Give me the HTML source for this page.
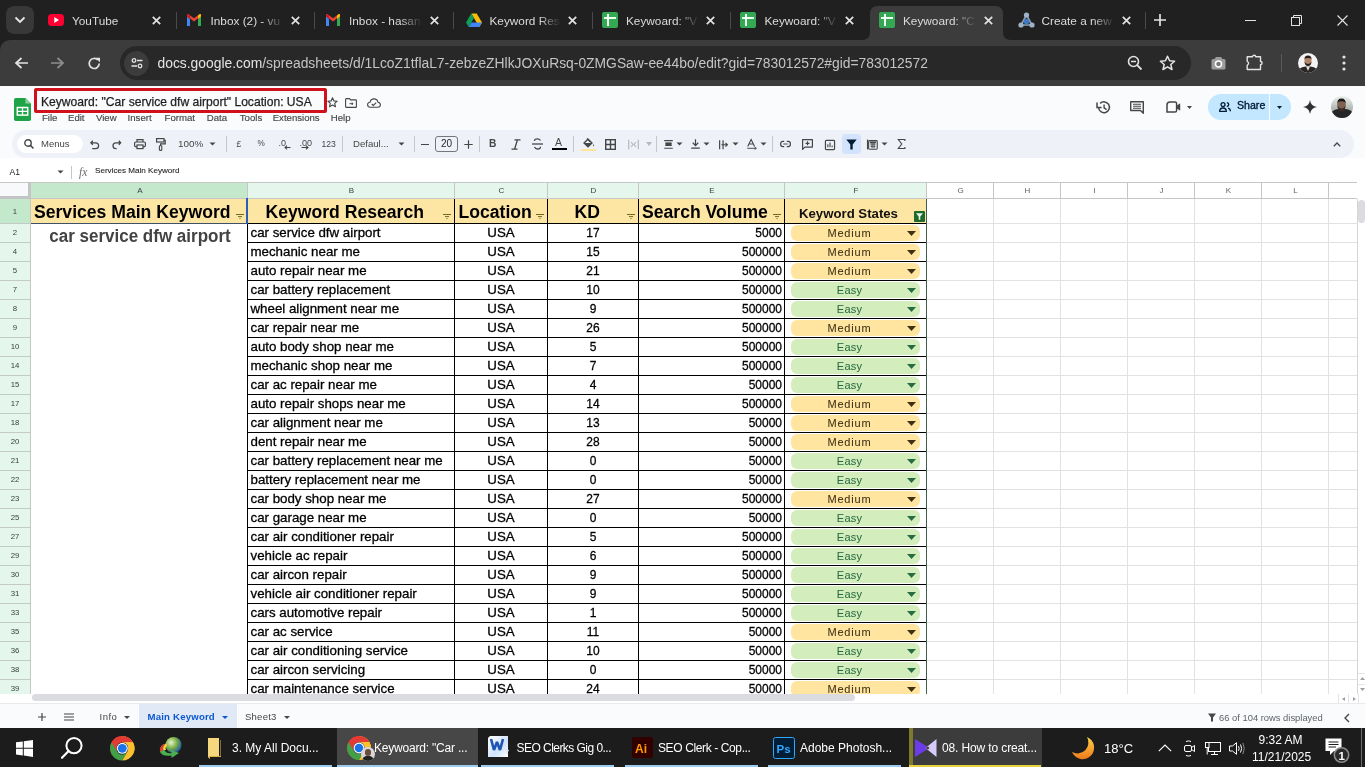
<!DOCTYPE html>
<html><head><meta charset="utf-8">
<style>
*{box-sizing:border-box;margin:0;padding:0}
html,body{width:1365px;height:767px;overflow:hidden;background:#fff;font-family:"Liberation Sans",sans-serif}
.a{position:absolute}
.t{white-space:nowrap;line-height:1}
.d{-webkit-text-stroke:0.3px #000}
svg.a{display:block;overflow:visible}
</style></head><body><div id="root" style="position:absolute;left:0;top:0;width:1365px;height:767px;overflow:hidden;will-change:transform">

<div class="a" style="left:0px;top:0px;width:1365px;height:40px;background:#202020;"></div>
<div class="a" style="left:6px;top:6px;width:28px;height:28px;background:#383838;border-radius:8px"></div>
<svg class="a" style="left:14px;top:16px;" width="12" height="8" viewBox="0 0 12 8"><path d="M1.5 1.5 L6 6 L10.5 1.5" fill="none" stroke="#e8e8e8" stroke-width="1.8"/></svg>
<svg class="a" style="left:862px;top:6px" width="150" height="34" viewBox="0 0 150 34"><path d="M0 34 Q8 34 8 26 L8 8 Q8 0 16 0 L133 0 Q141 0 141 8 L141 26 Q141 34 149 34 Z" fill="#3c3c3c"/></svg>
<svg class="a" style="left:48px;top:12px;" width="16" height="16" viewBox="0 0 16 16"><rect x="0" y="2" width="16" height="12" rx="3.5" fill="#ff0033"/><path d="M6.3 5 L11 8 L6.3 11 Z" fill="#fff"/></svg>
<div class="a t" style="left:72.0px;top:15.8px;width:73.0px;overflow:hidden;font-size:11.8px;color:#dcdcdc">YouTube</div>
<div class="a" style="left:123.0px;top:10px;width:22px;height:20px;background:linear-gradient(90deg,#20202000,#202020)"></div>
<svg class="a" style="left:152px;top:15.5px;" width="9" height="9" viewBox="0 0 9 9"><path d="M0.8 0.8 L8.2 8.2 M8.2 0.8 L0.8 8.2" stroke="#e3e3e3" stroke-width="1.7"/></svg>
<div class="a" style="left:176px;top:12px;width:1px;height:17px;background:#4a4a4a;"></div>
<svg class="a" style="left:186px;top:13px;" width="16" height="14" viewBox="0 0 16 14"><path d="M1 3 L1 13 L4 13 L4 6 Z" fill="#4285f4"/><path d="M15 3 L15 13 L12 13 L12 6 Z" fill="#34a853"/><path d="M1 3 L8 8.5 L15 3 L15 2 Q15 0.5 13.5 1.2 L8 5.3 L2.5 1.2 Q1 0.5 1 2 Z" fill="#ea4335"/><path d="M12 6 L15 3.5 L15 2 Q14.8 0.6 13.4 1.3 L12 2.4 Z" fill="#fbbc04"/><path d="M4 6 L1 3.5 L1 2 Q1.2 0.6 2.6 1.3 L4 2.4 Z" fill="#c5221f"/></svg>
<div class="a t" style="left:210.5px;top:15.8px;width:73.0px;overflow:hidden;font-size:11.8px;color:#dcdcdc">Inbox (2) - vu</div>
<div class="a" style="left:261.5px;top:10px;width:22px;height:20px;background:linear-gradient(90deg,#20202000,#202020)"></div>
<svg class="a" style="left:291px;top:15.5px;" width="9" height="9" viewBox="0 0 9 9"><path d="M0.8 0.8 L8.2 8.2 M8.2 0.8 L0.8 8.2" stroke="#e3e3e3" stroke-width="1.7"/></svg>
<div class="a" style="left:314px;top:12px;width:1px;height:17px;background:#4a4a4a;"></div>
<svg class="a" style="left:325px;top:13px;" width="16" height="14" viewBox="0 0 16 14"><path d="M1 3 L1 13 L4 13 L4 6 Z" fill="#4285f4"/><path d="M15 3 L15 13 L12 13 L12 6 Z" fill="#34a853"/><path d="M1 3 L8 8.5 L15 3 L15 2 Q15 0.5 13.5 1.2 L8 5.3 L2.5 1.2 Q1 0.5 1 2 Z" fill="#ea4335"/><path d="M12 6 L15 3.5 L15 2 Q14.8 0.6 13.4 1.3 L12 2.4 Z" fill="#fbbc04"/><path d="M4 6 L1 3.5 L1 2 Q1.2 0.6 2.6 1.3 L4 2.4 Z" fill="#c5221f"/></svg>
<div class="a t" style="left:349.0px;top:15.8px;width:73.0px;overflow:hidden;font-size:11.8px;color:#dcdcdc">Inbox - hasan</div>
<div class="a" style="left:400.0px;top:10px;width:22px;height:20px;background:linear-gradient(90deg,#20202000,#202020)"></div>
<svg class="a" style="left:430px;top:15.5px;" width="9" height="9" viewBox="0 0 9 9"><path d="M0.8 0.8 L8.2 8.2 M8.2 0.8 L0.8 8.2" stroke="#e3e3e3" stroke-width="1.7"/></svg>
<div class="a" style="left:453px;top:12px;width:1px;height:17px;background:#4a4a4a;"></div>
<svg class="a" style="left:466px;top:13px;" width="16" height="14" viewBox="0 0 16 14"><path d="M5.3 0.5 L10.7 0.5 L16 9.5 L13.3 14 Z" fill="#fbbc04"/><path d="M5.3 0.5 L0 9.5 L2.7 14 L8 5 Z" fill="#0f9d58"/><path d="M2.7 14 L13.3 14 L16 9.5 L5.4 9.5 Z" fill="#4285f4"/></svg>
<div class="a t" style="left:489.5px;top:15.8px;width:71.0px;overflow:hidden;font-size:11.8px;color:#dcdcdc">Keyword Rese</div>
<div class="a" style="left:538.5px;top:10px;width:22px;height:20px;background:linear-gradient(90deg,#20202000,#202020)"></div>
<svg class="a" style="left:568px;top:15.5px;" width="9" height="9" viewBox="0 0 9 9"><path d="M0.8 0.8 L8.2 8.2 M8.2 0.8 L0.8 8.2" stroke="#e3e3e3" stroke-width="1.7"/></svg>
<div class="a" style="left:592px;top:12px;width:1px;height:17px;background:#4a4a4a;"></div>
<svg class="a" style="left:602px;top:12px;" width="16" height="16" viewBox="0 0 16 16"><rect x="0" y="0" width="16" height="16" rx="2" fill="#34a853"/><path d="M2 6 L14 6 M6 2 L6 14" stroke="#f0fff4" stroke-width="2"/></svg>
<div class="a t" style="left:626.0px;top:15.8px;width:73.0px;overflow:hidden;font-size:11.8px;color:#dcdcdc">Keywoard: "V</div>
<div class="a" style="left:677.0px;top:10px;width:22px;height:20px;background:linear-gradient(90deg,#20202000,#202020)"></div>
<svg class="a" style="left:706px;top:15.5px;" width="9" height="9" viewBox="0 0 9 9"><path d="M0.8 0.8 L8.2 8.2 M8.2 0.8 L0.8 8.2" stroke="#e3e3e3" stroke-width="1.7"/></svg>
<div class="a" style="left:730px;top:12px;width:1px;height:17px;background:#4a4a4a;"></div>
<svg class="a" style="left:740px;top:12px;" width="16" height="16" viewBox="0 0 16 16"><rect x="0" y="0" width="16" height="16" rx="2" fill="#34a853"/><path d="M2 6 L14 6 M6 2 L6 14" stroke="#f0fff4" stroke-width="2"/></svg>
<div class="a t" style="left:764.5px;top:15.8px;width:73.0px;overflow:hidden;font-size:11.8px;color:#dcdcdc">Keywoard: "V</div>
<div class="a" style="left:815.5px;top:10px;width:22px;height:20px;background:linear-gradient(90deg,#20202000,#202020)"></div>
<svg class="a" style="left:845px;top:15.5px;" width="9" height="9" viewBox="0 0 9 9"><path d="M0.8 0.8 L8.2 8.2 M8.2 0.8 L0.8 8.2" stroke="#e3e3e3" stroke-width="1.7"/></svg>
<svg class="a" style="left:879px;top:12px;" width="16" height="16" viewBox="0 0 16 16"><rect x="0" y="0" width="16" height="16" rx="2" fill="#34a853"/><path d="M2 6 L14 6 M6 2 L6 14" stroke="#f0fff4" stroke-width="2"/></svg>
<div class="a t" style="left:903.0px;top:15.8px;width:73.0px;overflow:hidden;font-size:11.8px;color:#dcdcdc">Keywoard: "C</div>
<div class="a" style="left:954.0px;top:10px;width:22px;height:20px;background:linear-gradient(90deg,#3c3c3c00,#3c3c3c)"></div>
<svg class="a" style="left:984px;top:15.5px;" width="9" height="9" viewBox="0 0 9 9"><path d="M0.8 0.8 L8.2 8.2 M8.2 0.8 L0.8 8.2" stroke="#e3e3e3" stroke-width="1.7"/></svg>
<svg class="a" style="left:1018px;top:12px;" width="17" height="17" viewBox="0 0 17 17"><path d="M8.5 3 L3 13 L14 13 Z" fill="none" stroke="#8fa3b8" stroke-width="1.6"/><circle cx="8.5" cy="3" r="2.6" fill="#9fb3c8"/><circle cx="3" cy="13" r="2.6" fill="#9fb3c8"/><circle cx="14" cy="13" r="2.6" fill="#9fb3c8"/><circle cx="8.5" cy="9.5" r="2.8" fill="#3f7ac0"/></svg>
<div class="a t" style="left:1041.5px;top:15.8px;width:73.0px;overflow:hidden;font-size:11.8px;color:#dcdcdc">Create a new</div>
<div class="a" style="left:1092.5px;top:10px;width:22px;height:20px;background:linear-gradient(90deg,#20202000,#202020)"></div>
<svg class="a" style="left:1122px;top:15.5px;" width="9" height="9" viewBox="0 0 9 9"><path d="M0.8 0.8 L8.2 8.2 M8.2 0.8 L0.8 8.2" stroke="#e3e3e3" stroke-width="1.7"/></svg>
<div class="a" style="left:1145px;top:12px;width:1px;height:17px;background:#4a4a4a;"></div>
<svg class="a" style="left:1154px;top:14px;" width="12" height="12" viewBox="0 0 12 12"><path d="M6 0 L6 12 M0 6 L12 6" stroke="#e3e3e3" stroke-width="1.7"/></svg>
<div class="a" style="left:1245px;top:20px;width:11px;height:1px;background:#e3e3e3;"></div>
<svg class="a" style="left:1291px;top:15px;" width="11" height="11" viewBox="0 0 11 11"><rect x="0.5" y="2.5" width="8" height="8" fill="none" stroke="#e3e3e3" stroke-width="1"/><path d="M2.5 2.5 L2.5 0.5 L10.5 0.5 L10.5 8.5 L8.5 8.5" fill="none" stroke="#e3e3e3" stroke-width="1"/></svg>
<svg class="a" style="left:1337px;top:15px;" width="11" height="11" viewBox="0 0 11 11"><path d="M0.5 0.5 L10.5 10.5 M10.5 0.5 L0.5 10.5" stroke="#e3e3e3" stroke-width="1.1"/></svg>
<div class="a" style="left:0px;top:40px;width:14px;height:14px;background:#202020;"></div>
<div class="a" style="left:0px;top:40px;width:1365px;height:46px;background:#3c3c3c;border-top-left-radius:10px"></div>
<svg class="a" style="left:15px;top:57px;" width="13" height="12" viewBox="0 0 13 12"><path d="M6.5 1 L1 6 L6.5 11 M1 6 L13 6" fill="none" stroke="#e3e3e3" stroke-width="1.7"/></svg>
<svg class="a" style="left:51px;top:57px;" width="13" height="12" viewBox="0 0 13 12"><path d="M6.5 1 L12 6 L6.5 11 M12 6 L0 6" fill="none" stroke="#8e8e8e" stroke-width="1.7"/></svg>
<svg class="a" style="left:88px;top:57px;" width="13" height="13" viewBox="0 0 13 13"><path d="M11.2 6.5 A5 5 0 1 1 9.8 3" fill="none" stroke="#e3e3e3" stroke-width="1.7"/><path d="M7.5 0.8 L12 0.8 L12 5.3 Z" fill="#e3e3e3"/></svg>
<div class="a" style="left:120px;top:46px;width:1071px;height:34px;background:#282828;border-radius:17px"></div>
<div class="a" style="left:124px;top:51px;width:25px;height:25px;background:#3c3c3c;border-radius:50%"></div>
<svg class="a" style="left:131px;top:58px;" width="12" height="11" viewBox="0 0 12 11"><circle cx="3" cy="2.5" r="1.8" fill="none" stroke="#e3e3e3" stroke-width="1.3"/><path d="M6 2.5 L11.5 2.5 M0.5 8 L6 8" stroke="#e3e3e3" stroke-width="1.3"/><circle cx="9" cy="8" r="1.8" fill="none" stroke="#e3e3e3" stroke-width="1.3"/></svg>
<div class="a t" style="left:157.5px;top:57px;font-size:13.85px;color:#e3e3e3">docs.google.com<span style="color:#c4c4c4">/spreadsheets/d/1LcoZ1tflaL7-zebzeZHlkJOXuRsq-0ZMGSaw-ee44bo/edit?gid=783012572#gid=783012572</span></div>
<svg class="a" style="left:1127px;top:55px;" width="16" height="16" viewBox="0 0 16 16"><circle cx="6.5" cy="6.5" r="5" fill="none" stroke="#e3e3e3" stroke-width="1.6"/><path d="M4 6.5 L9 6.5" stroke="#e3e3e3" stroke-width="1.5"/><path d="M10.2 10.2 L14.5 14.5" stroke="#e3e3e3" stroke-width="1.8"/></svg>
<svg class="a" style="left:1159px;top:55px;" width="17" height="16" viewBox="0 0 17 16"><path d="M8.5 1.2 L10.6 5.8 L15.6 6.2 L11.8 9.5 L13 14.5 L8.5 11.8 L4 14.5 L5.2 9.5 L1.4 6.2 L6.4 5.8 Z" fill="none" stroke="#e3e3e3" stroke-width="1.5" stroke-linejoin="round"/></svg>
<svg class="a" style="left:1211px;top:56px;" width="15" height="14" viewBox="0 0 15 14"><path d="M0.5 4.5 Q0.5 3 2 3 L3.5 3 L5 1 L10 1 L11.5 3 L13 3 Q14.5 3 14.5 4.5 L14.5 12 Q14.5 13.5 13 13.5 L2 13.5 Q0.5 13.5 0.5 12 Z" fill="#9c9c9c"/><circle cx="7.5" cy="8" r="3" fill="#777" stroke="#fff" stroke-width="1.5"/></svg>
<svg class="a" style="left:1246px;top:54px;" width="17" height="17" viewBox="0 0 17 17"><path d="M1.2 2.8 L6.5 2.8 A1.6 1.6 0 0 1 9.7 2.8 L14.5 2.8 L14.5 7.5 A1.6 1.6 0 0 1 14.5 10.7 L14.5 15.5 L1.2 15.5 L1.2 11.2 Q4 9.2 1.2 7.2 Z" fill="none" stroke="#e3e3e3" stroke-width="1.4" stroke-linejoin="round"/></svg>
<div class="a" style="left:1281px;top:54px;width:1px;height:18px;background:#5a5a5a;"></div>
<svg class="a" style="left:1298px;top:53px" width="20" height="20" viewBox="0 0 20 20"><defs><clipPath id="av2"><circle cx="10" cy="10" r="10"/></clipPath></defs><g clip-path="url(#av2)"><rect width="20" height="20" fill="#f4f4f4"/><path d="M0 20 L1 16 Q4 13.5 7.5 13.5 L12.5 13.5 Q16 13.5 19 16 L20 20 Z" fill="#2a2626"/><path d="M8 13.5 L10 18 L12 13.5 Z" fill="#e8e4e0"/><ellipse cx="10" cy="8" rx="3.6" ry="4.6" fill="#b3856a"/><path d="M6.3 7 Q6.3 2.6 10 2.6 Q13.7 2.6 13.7 7 L13 5.6 Q10 4.3 7 5.6 Z" fill="#2a1e18"/><path d="M6.5 9 Q7 13 10 13 Q13 13 13.5 9 Q11.8 11 10 11 Q8.2 11 6.5 9 Z" fill="#2a1e18"/></g></svg>
<svg class="a" style="left:1342px;top:55px;" width="4" height="16" viewBox="0 0 4 16"><circle cx="2" cy="2" r="1.6" fill="#e3e3e3"/><circle cx="2" cy="8" r="1.6" fill="#e3e3e3"/><circle cx="2" cy="14" r="1.6" fill="#e3e3e3"/></svg>
<div class="a" style="left:0px;top:86px;width:1365px;height:96px;background:#f9fbfd;"></div>
<svg class="a" style="left:14px;top:98px;" width="17" height="23" viewBox="0 0 17 23"><path d="M1.8 0 L11.5 0 L17 5.5 L17 21.2 Q17 23 15.2 23 L1.8 23 Q0 23 0 21.2 L0 1.8 Q0 0 1.8 0 Z" fill="#1ea446"/><path d="M11.5 0 L17 5.5 L11.5 5.5 Z" fill="#8fd19e"/><rect x="3.3" y="9.5" width="10.4" height="7.6" fill="none" stroke="#fff" stroke-width="1.5"/><path d="M3.3 13.3 L13.7 13.3 M8.5 9.5 L8.5 17.1" stroke="#fff" stroke-width="1.3"/></svg>
<div class="a" style="left:34px;top:88px;width:293px;height:25px;background:transparent;border:3px solid #d0101a;border-radius:2px"></div>
<div class="a t" style="left:41px;top:95.9px;font-size:12.1px;color:#1f1f1f;-webkit-text-stroke:0.25px #1f1f1f">Keywoard: "Car service dfw airport" Location: USA</div>
<svg class="a" style="left:326.5px;top:97px;" width="11" height="11" viewBox="0 0 11 11"><path d="M5.5 0.8 L6.9 3.9 L10.2 4.2 L7.7 6.4 L8.5 9.8 L5.5 8 L2.5 9.8 L3.3 6.4 L0.8 4.2 L4.1 3.9 Z" fill="none" stroke="#444746" stroke-width="1.1" stroke-linejoin="round"/></svg>
<svg class="a" style="left:345px;top:97.5px;" width="12" height="10" viewBox="0 0 12 10"><path d="M0.6 1.3 Q0.6 0.6 1.3 0.6 L4.5 0.6 L5.6 1.9 L10.7 1.9 Q11.4 1.9 11.4 2.6 L11.4 8.7 Q11.4 9.4 10.7 9.4 L1.3 9.4 Q0.6 9.4 0.6 8.7 Z" fill="none" stroke="#444746" stroke-width="1.1"/><path d="M4.5 5.7 L8 5.7 M6.7 4.4 L8 5.7 L6.7 7" fill="none" stroke="#444746" stroke-width="1"/></svg>
<svg class="a" style="left:367px;top:97.5px;" width="14" height="10" viewBox="0 0 14 10"><path d="M3.3 9.3 Q0.6 9.3 0.6 6.8 Q0.6 4.5 3 4.3 Q3.7 0.9 7 0.9 Q10.2 0.9 11 4.2 Q13.4 4.5 13.4 6.8 Q13.4 9.3 10.7 9.3 Z" fill="none" stroke="#444746" stroke-width="1.1"/><path d="M4.7 6 L6.3 7.4 L9.2 4.6" fill="none" stroke="#444746" stroke-width="1.1"/></svg>
<div class="a t" style="left:42px;top:112.8px;font-size:9.6px;color:#444746;-webkit-text-stroke:0.15px #444746">File</div>
<div class="a t" style="left:68px;top:112.8px;font-size:9.6px;color:#444746;-webkit-text-stroke:0.15px #444746">Edit</div>
<div class="a t" style="left:96px;top:112.8px;font-size:9.6px;color:#444746;-webkit-text-stroke:0.15px #444746">View</div>
<div class="a t" style="left:127.6px;top:112.8px;font-size:9.6px;color:#444746;-webkit-text-stroke:0.15px #444746">Insert</div>
<div class="a t" style="left:164.6px;top:112.8px;font-size:9.6px;color:#444746;-webkit-text-stroke:0.15px #444746">Format</div>
<div class="a t" style="left:206.8px;top:112.8px;font-size:9.6px;color:#444746;-webkit-text-stroke:0.15px #444746">Data</div>
<div class="a t" style="left:239.8px;top:112.8px;font-size:9.6px;color:#444746;-webkit-text-stroke:0.15px #444746">Tools</div>
<div class="a t" style="left:272.7px;top:112.8px;font-size:9.6px;color:#444746;-webkit-text-stroke:0.15px #444746">Extensions</div>
<div class="a t" style="left:330.8px;top:112.8px;font-size:9.6px;color:#444746;-webkit-text-stroke:0.15px #444746">Help</div>
<svg class="a" style="left:1096px;top:100px;" width="15" height="15" viewBox="0 0 15 15"><path d="M2.6 7.5 A5.4 5.4 0 1 0 4.2 3.4" fill="none" stroke="#444746" stroke-width="1.5"/><path d="M1 2.6 L1 7.5 L5.6 7.5" fill="none" stroke="#444746" stroke-width="1.5"/><path d="M8.1 4.4 L8.1 7.9 L10.6 9.6" fill="none" stroke="#444746" stroke-width="1.4"/></svg>
<svg class="a" style="left:1130px;top:101px;" width="14" height="13" viewBox="0 0 14 13"><path d="M0.7 0.7 L13.3 0.7 L13.3 12.3 L10.5 9.5 L0.7 9.5 Z" fill="none" stroke="#444746" stroke-width="1.4" stroke-linejoin="round"/><path d="M3 3.2 L11 3.2 M3 5.2 L11 5.2 M3 7.2 L11 7.2" stroke="#444746" stroke-width="1.1"/></svg>
<svg class="a" style="left:1166px;top:101px;" width="15" height="12" viewBox="0 0 15 12"><path d="M1 4 Q1 1 4 1 L9 1 Q10.6 1 10.6 2.6 L10.6 9.4 Q10.6 11 9 11 L1 11 Z" fill="none" stroke="#444746" stroke-width="1.5"/><path d="M10.6 4.8 L14.2 2.2 L14.2 9.8 L10.6 7.2 Z" fill="#444746"/></svg>
<svg class="a" style="left:1187px;top:106px;" width="5" height="3" viewBox="0 0 5 3"><path d="M0 0 L5 0 L2.5 3 Z" fill="#444746"/></svg>
<div class="a" style="left:1208px;top:94px;width:83px;height:26px;background:#c2e7ff;border-radius:13px"></div>
<div class="a" style="left:1269px;top:94px;width:1px;height:26px;background:#f9fbfd;"></div>
<svg class="a" style="left:1219px;top:102px;" width="12" height="10" viewBox="0 0 12 10"><circle cx="4" cy="2.6" r="2" fill="none" stroke="#001d35" stroke-width="1.3"/><path d="M0.7 9.3 Q0.7 6 4 6 Q7.3 6 7.3 9.3 Z" fill="none" stroke="#001d35" stroke-width="1.3"/><path d="M7.8 0.7 Q9.8 0.9 9.8 2.6 Q9.8 4.3 7.8 4.5 M9 6.1 Q11.4 6.6 11.4 9.3" fill="none" stroke="#001d35" stroke-width="1.3"/></svg>
<div class="a t" style="left:1237px;top:100.2px;font-size:10.6px;color:#001d35;-webkit-text-stroke:0.35px #001d35">Share</div>
<svg class="a" style="left:1277px;top:106px;" width="5" height="3" viewBox="0 0 5 3"><path d="M0 0 L5 0 L2.5 3 Z" fill="#001d35"/></svg>
<svg class="a" style="left:1303px;top:100px;" width="14" height="14" viewBox="0 0 14 14"><path d="M7 0 Q7.8 6.2 14 7 Q7.8 7.8 7 14 Q6.2 7.8 0 7 Q6.2 6.2 7 0 Z" fill="#303134"/></svg>
<svg class="a" style="left:1331px;top:96px" width="22" height="22" viewBox="0 0 22 22"><defs><clipPath id="av1"><circle cx="11" cy="11" r="11"/></clipPath><linearGradient id="avg1" x1="0" y1="0" x2="0" y2="1"><stop offset="0" stop-color="#eef0ee"/><stop offset="0.5" stop-color="#b9c0bb"/><stop offset="1" stop-color="#8b938d"/></linearGradient></defs><g clip-path="url(#av1)"><rect width="22" height="22" fill="url(#avg1)"/><path d="M0 22 L0 17 Q3 13 8 13 L14 13 Q19 13 22 17 L22 22 Z" fill="#262626"/><ellipse cx="10.5" cy="9" rx="4.3" ry="5.5" fill="#7e6252"/><path d="M6.2 8 Q6 2.5 10.5 2.5 Q15 2.5 14.8 8 L14 6 Q10.5 4.5 7 6 Z" fill="#1c1a18"/><path d="M6.4 10 Q7 15.5 10.5 15.5 Q14 15.5 14.6 10 Q12.5 12.5 10.5 12.5 Q8.5 12.5 6.4 10 Z" fill="#3a2c24"/></g></svg>
<div class="a" style="left:12px;top:130px;width:1342px;height:28px;background:#eef2f8;border-radius:14px"></div>
<div class="a" style="left:17px;top:135px;width:66px;height:18px;background:#ffffff;border-radius:9px"></div>
<svg class="a" style="left:24px;top:139px;" width="10" height="10" viewBox="0 0 10 10"><circle cx="4" cy="4" r="3.2" fill="none" stroke="#444746" stroke-width="1.4"/><path d="M6.4 6.4 L9.5 9.5" stroke="#444746" stroke-width="1.5"/></svg>
<div class="a t" style="left:41px;top:138.8px;font-size:9.5px;color:#444746;">Menus</div>
<svg class="a" style="left:90px;top:140px;" width="10" height="10" viewBox="0 0 10 10"><path d="M2.8 0.8 L0.9 2.8 L2.8 4.8 M0.9 2.8 L5.6 2.8 Q8.6 2.8 8.6 5.8 Q8.6 8.7 5.6 8.7 L2.2 8.7" fill="none" stroke="#444746" stroke-width="1.25"/></svg>
<svg class="a" style="left:112px;top:140px;" width="10" height="10" viewBox="0 0 10 10"><path d="M6.8 0.8 L8.7 2.8 L6.8 4.8 M8.7 2.8 L4 2.8 Q1 2.8 1 5.8 Q1 8.7 4 8.7 L4.6 8.7" fill="none" stroke="#444746" stroke-width="1.25"/></svg>
<svg class="a" style="left:134px;top:139px;" width="12" height="10" viewBox="0 0 12 10"><path d="M3 3 L3 0.6 L9 0.6 L9 3" fill="none" stroke="#444746" stroke-width="1.2"/><rect x="0.6" y="3" width="10.8" height="4.8" rx="1.2" fill="none" stroke="#444746" stroke-width="1.2"/><rect x="3" y="6" width="6" height="3.6" fill="#edf2fa" stroke="#444746" stroke-width="1.2"/></svg>
<svg class="a" style="left:156px;top:138px;" width="10" height="13" viewBox="0 0 10 13"><rect x="0.6" y="0.6" width="7.4" height="3.4" fill="none" stroke="#444746" stroke-width="1.2"/><path d="M8 2.3 L9.2 2.3 L9.2 5.8 L4.6 5.8 L4.6 7.8" fill="none" stroke="#444746" stroke-width="1.2"/><rect x="3.4" y="7.8" width="2.4" height="4.6" rx="0.6" fill="none" stroke="#444746" stroke-width="1.1"/></svg>
<div class="a t" style="left:178px;top:138.8px;font-size:9.9px;color:#444746;">100%</div>
<svg class="a" style="left:209px;top:142px;" width="7" height="4" viewBox="0 0 7 4"><path d="M0.5 0.5 L6.5 0.5 L3.5 3.5 Z" fill="#444746"/></svg>
<div class="a" style="left:226px;top:136px;width:1px;height:16px;background:#c7c7c7;"></div>
<div class="a t" style="left:236.5px;top:139.5px;font-size:8.6px;color:#444746;">£</div>
<div class="a t" style="left:257.5px;top:139.8px;font-size:8.2px;color:#444746;">%</div>
<div class="a t" style="left:278.5px;top:138.5px;font-size:9px;color:#444746;">.0</div>
<svg class="a" style="left:284px;top:145px;" width="7" height="5" viewBox="0 0 7 5"><path d="M6.5 2.5 L1 2.5 M3 0.6 L1 2.5 L3 4.4" fill="none" stroke="#444746" stroke-width="1.1"/></svg>
<div class="a t" style="left:299.5px;top:138.5px;font-size:9px;color:#444746;">.00</div>
<svg class="a" style="left:301px;top:145px;" width="8" height="5" viewBox="0 0 8 5"><path d="M0.5 2.5 L7 2.5 M5 0.6 L7 2.5 L5 4.4" fill="none" stroke="#444746" stroke-width="1.1"/></svg>
<div class="a t" style="left:321.5px;top:139.8px;font-size:8.6px;color:#444746;">123</div>
<div class="a" style="left:342px;top:136px;width:1px;height:16px;background:#c7c7c7;"></div>
<div class="a t" style="left:353px;top:139px;font-size:9.6px;color:#444746;">Defaul...</div>
<svg class="a" style="left:398px;top:142px;" width="7" height="4" viewBox="0 0 7 4"><path d="M0.5 0.5 L6.5 0.5 L3.5 3.5 Z" fill="#444746"/></svg>
<div class="a" style="left:414px;top:136px;width:1px;height:16px;background:#c7c7c7;"></div>
<div class="a" style="left:421px;top:144px;width:8px;height:1.2px;background:#444746;"></div>
<div class="a" style="left:435px;top:136px;width:23px;height:16px;background:transparent;border:1px solid #747775;border-radius:3px"></div>
<div class="a t" style="left:441px;top:139.2px;font-size:10px;color:#1f1f1f;">20</div>
<svg class="a" style="left:464px;top:140px;" width="9" height="9" viewBox="0 0 9 9"><path d="M4.5 0.3 L4.5 8.7 M0.3 4.5 L8.7 4.5" stroke="#444746" stroke-width="1.2"/></svg>
<div class="a" style="left:479px;top:136px;width:1px;height:16px;background:#c7c7c7;"></div>
<div class="a t" style="left:489px;top:139.3px;font-size:10.2px;color:#444746;font-weight:bold">B</div>
<svg class="a" style="left:511px;top:139px;" width="10" height="11" viewBox="0 0 10 11"><path d="M3.5 0.8 L9.5 0.8 M0.5 10.2 L6.5 10.2 M6.5 0.8 L3.5 10.2" stroke="#444746" stroke-width="1.3"/></svg>
<svg class="a" style="left:532px;top:138px;" width="11" height="12" viewBox="0 0 11 12"><path d="M8.5 2.5 Q7.5 0.8 5.5 0.8 Q2.5 0.8 2.5 3 M2.5 9 Q3.5 11 5.5 11 Q8.5 11 8.5 8.8" fill="none" stroke="#444746" stroke-width="1.3"/><path d="M0 6 L11 6" stroke="#444746" stroke-width="1.3"/></svg>
<div class="a t" style="left:555px;top:137px;font-size:10.5px;color:#444746;">A</div>
<div class="a" style="left:552px;top:148px;width:15px;height:2px;background:#000;"></div>
<div class="a" style="left:573px;top:136px;width:1px;height:16px;background:#c7c7c7;"></div>
<svg class="a" style="left:583px;top:138px;" width="12" height="10" viewBox="0 0 12 10"><path d="M4 0.5 L7.5 4" stroke="#444746" stroke-width="1.2"/><path d="M1 5 L5 1.2 L9 5 L5 8.8 Z" fill="none" stroke="#444746" stroke-width="1.3"/><path d="M1 5 L9 5 L5 8.8 Z" fill="#444746"/><path d="M10.5 6 Q11.6 7.6 10.5 8.6 Q9.4 7.6 10.5 6 Z" fill="#444746"/></svg>
<div class="a" style="left:581px;top:149px;width:15px;height:1.5px;background:#fde49b;"></div>
<svg class="a" style="left:605px;top:139px;" width="11" height="11" viewBox="0 0 11 11"><rect x="0.7" y="0.7" width="9.6" height="9.6" fill="none" stroke="#444746" stroke-width="1.4"/><path d="M5.5 0.7 L5.5 10.3 M0.7 5.5 L10.3 5.5" stroke="#444746" stroke-width="1.4"/></svg>
<svg class="a" style="left:628px;top:139px;" width="11" height="11" viewBox="0 0 11 11"><path d="M0.7 0.7 L0.7 10.3 M10.3 0.7 L10.3 10.3 M3 3 L5 5.5 L3 8 M8 3 L6 5.5 L8 8" fill="none" stroke="#b5b8bc" stroke-width="1.2"/></svg>
<svg class="a" style="left:646px;top:142px;" width="6" height="4" viewBox="0 0 6 4"><path d="M0 0 L6 0 L3 4 Z" fill="#b5b8bc"/></svg>
<div class="a" style="left:656px;top:136px;width:1px;height:16px;background:#c7c7c7;"></div>
<svg class="a" style="left:663px;top:139px;transform:scale(0.86)" width="11" height="11" viewBox="0 0 11 11"><path d="M0.5 1 L10.5 1 M2 4 L9 4 M2 6.5 L9 6.5 M0.5 9.8 L10.5 9.8" stroke="#444746" stroke-width="1.2"/><rect x="2" y="3.2" width="7" height="4" fill="#444746"/></svg>
<svg class="a" style="left:676px;top:142px;" width="7" height="4" viewBox="0 0 7 4"><path d="M0.5 0.5 L6.5 0.5 L3.5 3.5 Z" fill="#444746"/></svg>
<svg class="a" style="left:690px;top:138px;transform:scale(0.86)" width="11" height="12" viewBox="0 0 11 12"><path d="M5.5 0.5 L5.5 7.5 M2.3 4.5 L5.5 7.8 L8.7 4.5 M0.5 10.8 L10.5 10.8" fill="none" stroke="#444746" stroke-width="1.4"/></svg>
<svg class="a" style="left:703px;top:142px;" width="7" height="4" viewBox="0 0 7 4"><path d="M0.5 0.5 L6.5 0.5 L3.5 3.5 Z" fill="#444746"/></svg>
<svg class="a" style="left:718px;top:139px;transform:scale(0.86)" width="11" height="12" viewBox="0 0 11 12"><path d="M1 0.5 L1 11 M5 0.5 L5 11 M3 5.7 L10 5.7 M7.8 3.5 L10 5.7 L7.8 7.9" fill="none" stroke="#444746" stroke-width="1.4"/></svg>
<svg class="a" style="left:732px;top:142px;" width="7" height="4" viewBox="0 0 7 4"><path d="M0.5 0.5 L6.5 0.5 L3.5 3.5 Z" fill="#444746"/></svg>
<svg class="a" style="left:746px;top:138px;transform:scale(0.86)" width="12" height="12" viewBox="0 0 12 12"><path d="M1 9 L5 0.8 L9 9 M2.5 6 L7.5 6" fill="none" stroke="#444746" stroke-width="1.3"/><path d="M0.5 11 L11 11 M9 9.5 L11 11 L9 12.5" fill="none" stroke="#444746" stroke-width="1.1"/></svg>
<svg class="a" style="left:760px;top:142px;" width="7" height="4" viewBox="0 0 7 4"><path d="M0.5 0.5 L6.5 0.5 L3.5 3.5 Z" fill="#444746"/></svg>
<div class="a" style="left:772px;top:136px;width:1px;height:16px;background:#c7c7c7;"></div>
<svg class="a" style="left:779px;top:140px;transform:scale(0.86)" width="13" height="8" viewBox="0 0 13 8"><path d="M5 1 L3.5 1 Q0.8 1 0.8 4 Q0.8 7 3.5 7 L5 7 M8 1 L9.5 1 Q12.2 1 12.2 4 Q12.2 7 9.5 7 L8 7 M4 4 L9 4" fill="none" stroke="#444746" stroke-width="1.4"/></svg>
<svg class="a" style="left:801px;top:138px;transform:scale(0.86)" width="13" height="13" viewBox="0 0 13 13"><path d="M0.8 0.8 L12.2 0.8 L12.2 9.5 L3.5 9.5 L0.8 12.2 Z" fill="none" stroke="#444746" stroke-width="1.4" stroke-linejoin="round"/><path d="M6.5 2.8 L6.5 7.5 M4.2 5.2 L8.8 5.2" stroke="#444746" stroke-width="1.4"/></svg>
<svg class="a" style="left:824px;top:139px;transform:scale(0.86)" width="12" height="12" viewBox="0 0 12 12"><rect x="0.7" y="0.7" width="10.6" height="10.6" rx="1" fill="none" stroke="#444746" stroke-width="1.4"/><path d="M3.5 8.5 L3.5 5 M6 8.5 L6 3 M8.5 8.5 L8.5 6.5" stroke="#444746" stroke-width="1.3"/></svg>
<div class="a" style="left:842px;top:134px;width:19px;height:20px;background:#d3e3fd;border-radius:4px"></div>
<svg class="a" style="left:846px;top:139px;" width="11" height="11" viewBox="0 0 11 11"><path d="M0.3 0.5 L10.7 0.5 L6.7 5.5 L6.7 10.5 L4.3 10.5 L4.3 5.5 Z" fill="#001d35"/></svg>
<svg class="a" style="left:866px;top:138px;transform:scale(0.86)" width="13" height="13" viewBox="0 0 13 13"><rect x="2" y="2" width="10" height="10" rx="1" fill="none" stroke="#444746" stroke-width="1.3"/><path d="M0.7 0.7 L0.7 12.2" stroke="#444746" stroke-width="1.3"/><path d="M4 6 L10 6 M4 8.5 L10 8.5 M6 5 L6 11 M8.3 5 L8.3 11" stroke="#444746" stroke-width="1.1"/><rect x="3.5" y="3" width="7" height="2" fill="#444746"/></svg>
<svg class="a" style="left:881px;top:142px;" width="7" height="4" viewBox="0 0 7 4"><path d="M0.5 0.5 L6.5 0.5 L3.5 3.5 Z" fill="#444746"/></svg>
<svg class="a" style="left:897px;top:138px;transform:scale(0.86)" width="9" height="12" viewBox="0 0 9 12"><path d="M8.5 2.5 L8.5 0.8 L0.8 0.8 L4.8 6 L0.8 11.2 L8.5 11.2 L8.5 9.5" fill="none" stroke="#444746" stroke-width="1.3"/></svg>
<svg class="a" style="left:1333px;top:142px;" width="8" height="5" viewBox="0 0 8 5"><path d="M0.8 4.2 L4 1 L7.2 4.2" fill="none" stroke="#444746" stroke-width="1.3"/></svg>
<div class="a" style="left:0px;top:158px;width:1365px;height:24px;background:#ffffff;"></div>
<div class="a t" style="left:9.5px;top:167.5px;font-size:8.6px;color:#1f1f1f;">A1</div>
<svg class="a" style="left:57px;top:170px;" width="7" height="4" viewBox="0 0 7 4"><path d="M0.5 0.5 L6.5 0.5 L3.5 3.5 Z" fill="#444746"/></svg>
<div class="a" style="left:71px;top:166px;width:1px;height:13px;background:#c7c7c7;"></div>
<div class="a t" style="left:79px;top:166.5px;font-size:11.5px;color:#6b6f73;font-family:'Liberation Serif',serif"><i>fx</i></div>
<div class="a t" style="left:95px;top:167.2px;font-size:8.1px;color:#1f1f1f;-webkit-text-stroke:0.1px #1f1f1f">Services Main Keyword</div>
<div class="a" style="left:0px;top:182px;width:1365px;height:17px;background:#ffffff;"></div>
<div class="a" style="left:1358px;top:183px;width:7px;height:15px;background:#f1f3f4;"></div>
<div class="a" style="left:0px;top:183px;width:28px;height:13px;background:#f8f9fa;"></div>
<div class="a" style="left:31px;top:183px;width:216px;height:15px;background:#c4e8cc;"></div>
<div class="a" style="left:248px;top:183px;width:678px;height:15px;background:#e5f6ec;"></div>
<div class="a" style="left:0px;top:182px;width:1365px;height:1px;background:#c4c7c5;"></div>
<div class="a" style="left:31px;top:198px;width:1334px;height:1px;background:#c4c7c5;"></div>
<div class="a" style="left:1357px;top:183px;width:1px;height:15px;background:#c4c7c5;"></div>
<div class="a" style="left:247px;top:183px;width:1px;height:15px;background:#c4c7c5;"></div>
<div class="a" style="left:454px;top:183px;width:1px;height:15px;background:#c4c7c5;"></div>
<div class="a" style="left:547px;top:183px;width:1px;height:15px;background:#c4c7c5;"></div>
<div class="a" style="left:638px;top:183px;width:1px;height:15px;background:#c4c7c5;"></div>
<div class="a" style="left:784px;top:183px;width:1px;height:15px;background:#c4c7c5;"></div>
<div class="a" style="left:926px;top:183px;width:1px;height:15px;background:#c4c7c5;"></div>
<div class="a" style="left:993px;top:183px;width:1px;height:15px;background:#c4c7c5;"></div>
<div class="a" style="left:1060px;top:183px;width:1px;height:15px;background:#c4c7c5;"></div>
<div class="a" style="left:1127px;top:183px;width:1px;height:15px;background:#c4c7c5;"></div>
<div class="a" style="left:1194px;top:183px;width:1px;height:15px;background:#c4c7c5;"></div>
<div class="a" style="left:1261px;top:183px;width:1px;height:15px;background:#c4c7c5;"></div>
<div class="a" style="left:1328px;top:183px;width:1px;height:15px;background:#c4c7c5;"></div>
<div class="a" style="left:28px;top:182px;width:3px;height:17px;background:#c2c4c5;"></div>
<div class="a" style="left:0px;top:196px;width:31px;height:3px;background:#c2c4c5;"></div>
<div class="a t" style="left:130.0px;top:187px;width:20px;text-align:center;font-size:8px;color:#3c4043">A</div>
<div class="a t" style="left:341.5px;top:187px;width:20px;text-align:center;font-size:8px;color:#3c4043">B</div>
<div class="a t" style="left:491.5px;top:187px;width:20px;text-align:center;font-size:8px;color:#3c4043">C</div>
<div class="a t" style="left:583.5px;top:187px;width:20px;text-align:center;font-size:8px;color:#3c4043">D</div>
<div class="a t" style="left:702.0px;top:187px;width:20px;text-align:center;font-size:8px;color:#3c4043">E</div>
<div class="a t" style="left:846.0px;top:187px;width:20px;text-align:center;font-size:8px;color:#3c4043">F</div>
<div class="a t" style="left:950.5px;top:187px;width:20px;text-align:center;font-size:8px;color:#5f6368">G</div>
<div class="a t" style="left:1017.5px;top:187px;width:20px;text-align:center;font-size:8px;color:#5f6368">H</div>
<div class="a t" style="left:1084.5px;top:187px;width:20px;text-align:center;font-size:8px;color:#5f6368">I</div>
<div class="a t" style="left:1151.5px;top:187px;width:20px;text-align:center;font-size:8px;color:#5f6368">J</div>
<div class="a t" style="left:1218.5px;top:187px;width:20px;text-align:center;font-size:8px;color:#5f6368">K</div>
<div class="a t" style="left:1285.5px;top:187px;width:20px;text-align:center;font-size:8px;color:#5f6368">L</div>
<div class="a" style="left:0px;top:199px;width:30px;height:24px;background:#c4e8cc;"></div>
<div class="a" style="left:0px;top:224px;width:30px;height:470px;background:#e5f6ec;"></div>
<div class="a" style="left:30px;top:199px;width:1px;height:495px;background:#c4c7c5;"></div>
<div class="a" style="left:0px;top:223px;width:30px;height:1px;background:#c3cbc6;"></div>
<div class="a t" style="left:0px;top:229.2px;width:30px;text-align:center;font-size:7.8px;color:#3c4043">2</div>
<div class="a" style="left:0px;top:242px;width:30px;height:1px;background:#c3cbc6;"></div>
<div class="a t" style="left:0px;top:248.2px;width:30px;text-align:center;font-size:7.8px;color:#3c4043">4</div>
<div class="a" style="left:0px;top:261px;width:30px;height:1px;background:#c3cbc6;"></div>
<div class="a t" style="left:0px;top:267.2px;width:30px;text-align:center;font-size:7.8px;color:#3c4043">5</div>
<div class="a" style="left:0px;top:280px;width:30px;height:1px;background:#c3cbc6;"></div>
<div class="a t" style="left:0px;top:286.2px;width:30px;text-align:center;font-size:7.8px;color:#3c4043">7</div>
<div class="a" style="left:0px;top:299px;width:30px;height:1px;background:#c3cbc6;"></div>
<div class="a t" style="left:0px;top:305.2px;width:30px;text-align:center;font-size:7.8px;color:#3c4043">8</div>
<div class="a" style="left:0px;top:318px;width:30px;height:1px;background:#c3cbc6;"></div>
<div class="a t" style="left:0px;top:324.2px;width:30px;text-align:center;font-size:7.8px;color:#3c4043">9</div>
<div class="a" style="left:0px;top:337px;width:30px;height:1px;background:#c3cbc6;"></div>
<div class="a t" style="left:0px;top:343.2px;width:30px;text-align:center;font-size:7.8px;color:#3c4043">10</div>
<div class="a" style="left:0px;top:356px;width:30px;height:1px;background:#c3cbc6;"></div>
<div class="a t" style="left:0px;top:362.2px;width:30px;text-align:center;font-size:7.8px;color:#3c4043">14</div>
<div class="a" style="left:0px;top:375px;width:30px;height:1px;background:#c3cbc6;"></div>
<div class="a t" style="left:0px;top:381.2px;width:30px;text-align:center;font-size:7.8px;color:#3c4043">15</div>
<div class="a" style="left:0px;top:394px;width:30px;height:1px;background:#c3cbc6;"></div>
<div class="a t" style="left:0px;top:400.2px;width:30px;text-align:center;font-size:7.8px;color:#3c4043">17</div>
<div class="a" style="left:0px;top:413px;width:30px;height:1px;background:#c3cbc6;"></div>
<div class="a t" style="left:0px;top:419.2px;width:30px;text-align:center;font-size:7.8px;color:#3c4043">18</div>
<div class="a" style="left:0px;top:432px;width:30px;height:1px;background:#c3cbc6;"></div>
<div class="a t" style="left:0px;top:438.2px;width:30px;text-align:center;font-size:7.8px;color:#3c4043">20</div>
<div class="a" style="left:0px;top:451px;width:30px;height:1px;background:#c3cbc6;"></div>
<div class="a t" style="left:0px;top:457.2px;width:30px;text-align:center;font-size:7.8px;color:#3c4043">21</div>
<div class="a" style="left:0px;top:470px;width:30px;height:1px;background:#c3cbc6;"></div>
<div class="a t" style="left:0px;top:476.2px;width:30px;text-align:center;font-size:7.8px;color:#3c4043">22</div>
<div class="a" style="left:0px;top:489px;width:30px;height:1px;background:#c3cbc6;"></div>
<div class="a t" style="left:0px;top:495.2px;width:30px;text-align:center;font-size:7.8px;color:#3c4043">23</div>
<div class="a" style="left:0px;top:508px;width:30px;height:1px;background:#c3cbc6;"></div>
<div class="a t" style="left:0px;top:514.2px;width:30px;text-align:center;font-size:7.8px;color:#3c4043">25</div>
<div class="a" style="left:0px;top:527px;width:30px;height:1px;background:#c3cbc6;"></div>
<div class="a t" style="left:0px;top:533.2px;width:30px;text-align:center;font-size:7.8px;color:#3c4043">27</div>
<div class="a" style="left:0px;top:546px;width:30px;height:1px;background:#c3cbc6;"></div>
<div class="a t" style="left:0px;top:552.2px;width:30px;text-align:center;font-size:7.8px;color:#3c4043">29</div>
<div class="a" style="left:0px;top:565px;width:30px;height:1px;background:#c3cbc6;"></div>
<div class="a t" style="left:0px;top:571.2px;width:30px;text-align:center;font-size:7.8px;color:#3c4043">30</div>
<div class="a" style="left:0px;top:584px;width:30px;height:1px;background:#c3cbc6;"></div>
<div class="a t" style="left:0px;top:590.2px;width:30px;text-align:center;font-size:7.8px;color:#3c4043">31</div>
<div class="a" style="left:0px;top:603px;width:30px;height:1px;background:#c3cbc6;"></div>
<div class="a t" style="left:0px;top:609.2px;width:30px;text-align:center;font-size:7.8px;color:#3c4043">33</div>
<div class="a" style="left:0px;top:622px;width:30px;height:1px;background:#c3cbc6;"></div>
<div class="a t" style="left:0px;top:628.2px;width:30px;text-align:center;font-size:7.8px;color:#3c4043">35</div>
<div class="a" style="left:0px;top:641px;width:30px;height:1px;background:#c3cbc6;"></div>
<div class="a t" style="left:0px;top:647.2px;width:30px;text-align:center;font-size:7.8px;color:#3c4043">36</div>
<div class="a" style="left:0px;top:660px;width:30px;height:1px;background:#c3cbc6;"></div>
<div class="a t" style="left:0px;top:666.2px;width:30px;text-align:center;font-size:7.8px;color:#3c4043">38</div>
<div class="a" style="left:0px;top:679px;width:30px;height:1px;background:#c3cbc6;"></div>
<div class="a t" style="left:0px;top:685.2px;width:30px;text-align:center;font-size:7.8px;color:#3c4043">39</div>
<div class="a t" style="left:0px;top:207.5px;width:30px;text-align:center;font-size:7.8px;color:#3c4043">1</div>
<div class="a" style="left:927px;top:223px;width:430px;height:1px;background:#e2e2e2;"></div>
<div class="a" style="left:927px;top:242px;width:430px;height:1px;background:#e2e2e2;"></div>
<div class="a" style="left:927px;top:261px;width:430px;height:1px;background:#e2e2e2;"></div>
<div class="a" style="left:927px;top:280px;width:430px;height:1px;background:#e2e2e2;"></div>
<div class="a" style="left:927px;top:299px;width:430px;height:1px;background:#e2e2e2;"></div>
<div class="a" style="left:927px;top:318px;width:430px;height:1px;background:#e2e2e2;"></div>
<div class="a" style="left:927px;top:337px;width:430px;height:1px;background:#e2e2e2;"></div>
<div class="a" style="left:927px;top:356px;width:430px;height:1px;background:#e2e2e2;"></div>
<div class="a" style="left:927px;top:375px;width:430px;height:1px;background:#e2e2e2;"></div>
<div class="a" style="left:927px;top:394px;width:430px;height:1px;background:#e2e2e2;"></div>
<div class="a" style="left:927px;top:413px;width:430px;height:1px;background:#e2e2e2;"></div>
<div class="a" style="left:927px;top:432px;width:430px;height:1px;background:#e2e2e2;"></div>
<div class="a" style="left:927px;top:451px;width:430px;height:1px;background:#e2e2e2;"></div>
<div class="a" style="left:927px;top:470px;width:430px;height:1px;background:#e2e2e2;"></div>
<div class="a" style="left:927px;top:489px;width:430px;height:1px;background:#e2e2e2;"></div>
<div class="a" style="left:927px;top:508px;width:430px;height:1px;background:#e2e2e2;"></div>
<div class="a" style="left:927px;top:527px;width:430px;height:1px;background:#e2e2e2;"></div>
<div class="a" style="left:927px;top:546px;width:430px;height:1px;background:#e2e2e2;"></div>
<div class="a" style="left:927px;top:565px;width:430px;height:1px;background:#e2e2e2;"></div>
<div class="a" style="left:927px;top:584px;width:430px;height:1px;background:#e2e2e2;"></div>
<div class="a" style="left:927px;top:603px;width:430px;height:1px;background:#e2e2e2;"></div>
<div class="a" style="left:927px;top:622px;width:430px;height:1px;background:#e2e2e2;"></div>
<div class="a" style="left:927px;top:641px;width:430px;height:1px;background:#e2e2e2;"></div>
<div class="a" style="left:927px;top:660px;width:430px;height:1px;background:#e2e2e2;"></div>
<div class="a" style="left:927px;top:679px;width:430px;height:1px;background:#e2e2e2;"></div>
<div class="a" style="left:993px;top:199px;width:1px;height:495px;background:#e2e2e2;"></div>
<div class="a" style="left:1060px;top:199px;width:1px;height:495px;background:#e2e2e2;"></div>
<div class="a" style="left:1127px;top:199px;width:1px;height:495px;background:#e2e2e2;"></div>
<div class="a" style="left:1194px;top:199px;width:1px;height:495px;background:#e2e2e2;"></div>
<div class="a" style="left:1261px;top:199px;width:1px;height:495px;background:#e2e2e2;"></div>
<div class="a" style="left:1328px;top:199px;width:1px;height:495px;background:#e2e2e2;"></div>
<div class="a" style="left:31px;top:199px;width:895px;height:24px;background:#fde5a3;"></div>
<div class="a t" style="left:34px;top:203.90px;font-size:17.6px;color:#000;font-weight:bold;">Services Main Keyword</div>
<div class="a t" style="left:265.5px;top:203.90px;font-size:17.6px;color:#000;font-weight:bold;">Keyword Research</div>
<div class="a t" style="left:458.5px;top:203.90px;font-size:17.6px;color:#000;font-weight:bold;">Location</div>
<div class="a t" style="left:574.5px;top:203.90px;font-size:17.6px;color:#000;font-weight:bold;">KD</div>
<div class="a t" style="left:642px;top:203.90px;font-size:17.6px;color:#000;font-weight:bold;">Search Volume</div>
<div class="a t" style="left:799px;top:206.83px;font-size:13.2px;color:#111;font-weight:bold;">Keyword States</div>
<svg class="a" style="left:236px;top:214px;" width="8" height="5" viewBox="0 0 8 5"><path d="M0 0.5 L8 0.5 M2 2.6 L6 2.6 M3.5 4.6 L4.5 4.6" stroke="#6b6a1f" stroke-width="1"/></svg>
<svg class="a" style="left:443px;top:214px;" width="8" height="5" viewBox="0 0 8 5"><path d="M0 0.5 L8 0.5 M2 2.6 L6 2.6 M3.5 4.6 L4.5 4.6" stroke="#6b6a1f" stroke-width="1"/></svg>
<svg class="a" style="left:536px;top:214px;" width="8" height="5" viewBox="0 0 8 5"><path d="M0 0.5 L8 0.5 M2 2.6 L6 2.6 M3.5 4.6 L4.5 4.6" stroke="#6b6a1f" stroke-width="1"/></svg>
<svg class="a" style="left:627px;top:214px;" width="8" height="5" viewBox="0 0 8 5"><path d="M0 0.5 L8 0.5 M2 2.6 L6 2.6 M3.5 4.6 L4.5 4.6" stroke="#6b6a1f" stroke-width="1"/></svg>
<svg class="a" style="left:773px;top:214px;" width="8" height="5" viewBox="0 0 8 5"><path d="M0 0.5 L8 0.5 M2 2.6 L6 2.6 M3.5 4.6 L4.5 4.6" stroke="#6b6a1f" stroke-width="1"/></svg>
<div class="a" style="left:914px;top:211px;width:11px;height:11px;background:#1e6a2c;border-radius:1px"></div>
<svg class="a" style="left:916px;top:213px;" width="7" height="7" viewBox="0 0 7 7"><path d="M0 0.3 L7 0.3 L4.3 3.5 L4.3 6.8 L2.7 6.8 L2.7 3.5 Z" fill="#e8f5e9"/></svg>
<div class="a t" style="left:32px;top:228.4px;width:216px;text-align:center;font-size:17px;font-weight:bold;color:#434343;transform:scaleY(1.09);transform-origin:50% 85%">car service dfw airport</div>
<div class="a t d" style="left:250.5px;top:226.39px;font-size:13.3px;color:#000">car service dfw airport</div>
<div class="a t d" style="left:455px;top:226.39px;width:92px;text-align:center;font-size:13.3px;color:#000">USA</div>
<div class="a t d" style="left:548px;top:226.39px;width:90px;text-align:center;font-size:13.3px;color:#000;transform:scaleX(0.9)">17</div>
<div class="a t d" style="left:640px;top:226.39px;width:142px;text-align:right;font-size:13.3px;color:#000;transform:scaleX(0.9);transform-origin:100% 50%">5000</div>
<div class="a" style="left:791px;top:225px;width:129px;height:16px;background:#ffe5a0;border-radius:6px"></div>
<div class="a t" style="left:791.5px;top:227.6px;width:116px;text-align:center;font-size:11px;letter-spacing:0.85px;color:#3f3014;-webkit-text-stroke:0.05px #3f3014">Medium</div>
<svg class="a" style="left:907px;top:230.5px;" width="9" height="5" viewBox="0 0 9 5"><path d="M0 0 L9 0 L4.5 5 Z" fill="#3f3014"/></svg>
<div class="a t d" style="left:250.5px;top:245.39px;font-size:13.3px;color:#000">mechanic near me</div>
<div class="a t d" style="left:455px;top:245.39px;width:92px;text-align:center;font-size:13.3px;color:#000">USA</div>
<div class="a t d" style="left:548px;top:245.39px;width:90px;text-align:center;font-size:13.3px;color:#000;transform:scaleX(0.9)">15</div>
<div class="a t d" style="left:640px;top:245.39px;width:142px;text-align:right;font-size:13.3px;color:#000;transform:scaleX(0.9);transform-origin:100% 50%">500000</div>
<div class="a" style="left:791px;top:244px;width:129px;height:16px;background:#ffe5a0;border-radius:6px"></div>
<div class="a t" style="left:791.5px;top:246.6px;width:116px;text-align:center;font-size:11px;letter-spacing:0.85px;color:#3f3014;-webkit-text-stroke:0.05px #3f3014">Medium</div>
<svg class="a" style="left:907px;top:249.5px;" width="9" height="5" viewBox="0 0 9 5"><path d="M0 0 L9 0 L4.5 5 Z" fill="#3f3014"/></svg>
<div class="a t d" style="left:250.5px;top:264.39px;font-size:13.3px;color:#000">auto repair near me</div>
<div class="a t d" style="left:455px;top:264.39px;width:92px;text-align:center;font-size:13.3px;color:#000">USA</div>
<div class="a t d" style="left:548px;top:264.39px;width:90px;text-align:center;font-size:13.3px;color:#000;transform:scaleX(0.9)">21</div>
<div class="a t d" style="left:640px;top:264.39px;width:142px;text-align:right;font-size:13.3px;color:#000;transform:scaleX(0.9);transform-origin:100% 50%">500000</div>
<div class="a" style="left:791px;top:263px;width:129px;height:16px;background:#ffe5a0;border-radius:6px"></div>
<div class="a t" style="left:791.5px;top:265.6px;width:116px;text-align:center;font-size:11px;letter-spacing:0.85px;color:#3f3014;-webkit-text-stroke:0.05px #3f3014">Medium</div>
<svg class="a" style="left:907px;top:268.5px;" width="9" height="5" viewBox="0 0 9 5"><path d="M0 0 L9 0 L4.5 5 Z" fill="#3f3014"/></svg>
<div class="a t d" style="left:250.5px;top:283.39px;font-size:13.3px;color:#000">car battery replacement</div>
<div class="a t d" style="left:455px;top:283.39px;width:92px;text-align:center;font-size:13.3px;color:#000">USA</div>
<div class="a t d" style="left:548px;top:283.39px;width:90px;text-align:center;font-size:13.3px;color:#000;transform:scaleX(0.9)">10</div>
<div class="a t d" style="left:640px;top:283.39px;width:142px;text-align:right;font-size:13.3px;color:#000;transform:scaleX(0.9);transform-origin:100% 50%">500000</div>
<div class="a" style="left:791px;top:282px;width:129px;height:16px;background:#d4edbc;border-radius:6px"></div>
<div class="a t" style="left:791.5px;top:284.6px;width:116px;text-align:center;font-size:11px;letter-spacing:0.2px;color:#276b43;-webkit-text-stroke:0.05px #276b43">Easy</div>
<svg class="a" style="left:907px;top:287.5px;" width="9" height="5" viewBox="0 0 9 5"><path d="M0 0 L9 0 L4.5 5 Z" fill="#276b43"/></svg>
<div class="a t d" style="left:250.5px;top:302.39px;font-size:13.3px;color:#000">wheel alignment near me</div>
<div class="a t d" style="left:455px;top:302.39px;width:92px;text-align:center;font-size:13.3px;color:#000">USA</div>
<div class="a t d" style="left:548px;top:302.39px;width:90px;text-align:center;font-size:13.3px;color:#000;transform:scaleX(0.9)">9</div>
<div class="a t d" style="left:640px;top:302.39px;width:142px;text-align:right;font-size:13.3px;color:#000;transform:scaleX(0.9);transform-origin:100% 50%">500000</div>
<div class="a" style="left:791px;top:301px;width:129px;height:16px;background:#d4edbc;border-radius:6px"></div>
<div class="a t" style="left:791.5px;top:303.6px;width:116px;text-align:center;font-size:11px;letter-spacing:0.2px;color:#276b43;-webkit-text-stroke:0.05px #276b43">Easy</div>
<svg class="a" style="left:907px;top:306.5px;" width="9" height="5" viewBox="0 0 9 5"><path d="M0 0 L9 0 L4.5 5 Z" fill="#276b43"/></svg>
<div class="a t d" style="left:250.5px;top:321.39px;font-size:13.3px;color:#000">car repair near me</div>
<div class="a t d" style="left:455px;top:321.39px;width:92px;text-align:center;font-size:13.3px;color:#000">USA</div>
<div class="a t d" style="left:548px;top:321.39px;width:90px;text-align:center;font-size:13.3px;color:#000;transform:scaleX(0.9)">26</div>
<div class="a t d" style="left:640px;top:321.39px;width:142px;text-align:right;font-size:13.3px;color:#000;transform:scaleX(0.9);transform-origin:100% 50%">500000</div>
<div class="a" style="left:791px;top:320px;width:129px;height:16px;background:#ffe5a0;border-radius:6px"></div>
<div class="a t" style="left:791.5px;top:322.6px;width:116px;text-align:center;font-size:11px;letter-spacing:0.85px;color:#3f3014;-webkit-text-stroke:0.05px #3f3014">Medium</div>
<svg class="a" style="left:907px;top:325.5px;" width="9" height="5" viewBox="0 0 9 5"><path d="M0 0 L9 0 L4.5 5 Z" fill="#3f3014"/></svg>
<div class="a t d" style="left:250.5px;top:340.39px;font-size:13.3px;color:#000">auto body shop near me</div>
<div class="a t d" style="left:455px;top:340.39px;width:92px;text-align:center;font-size:13.3px;color:#000">USA</div>
<div class="a t d" style="left:548px;top:340.39px;width:90px;text-align:center;font-size:13.3px;color:#000;transform:scaleX(0.9)">5</div>
<div class="a t d" style="left:640px;top:340.39px;width:142px;text-align:right;font-size:13.3px;color:#000;transform:scaleX(0.9);transform-origin:100% 50%">500000</div>
<div class="a" style="left:791px;top:339px;width:129px;height:16px;background:#d4edbc;border-radius:6px"></div>
<div class="a t" style="left:791.5px;top:341.6px;width:116px;text-align:center;font-size:11px;letter-spacing:0.2px;color:#276b43;-webkit-text-stroke:0.05px #276b43">Easy</div>
<svg class="a" style="left:907px;top:344.5px;" width="9" height="5" viewBox="0 0 9 5"><path d="M0 0 L9 0 L4.5 5 Z" fill="#276b43"/></svg>
<div class="a t d" style="left:250.5px;top:359.39px;font-size:13.3px;color:#000">mechanic shop near me</div>
<div class="a t d" style="left:455px;top:359.39px;width:92px;text-align:center;font-size:13.3px;color:#000">USA</div>
<div class="a t d" style="left:548px;top:359.39px;width:90px;text-align:center;font-size:13.3px;color:#000;transform:scaleX(0.9)">7</div>
<div class="a t d" style="left:640px;top:359.39px;width:142px;text-align:right;font-size:13.3px;color:#000;transform:scaleX(0.9);transform-origin:100% 50%">500000</div>
<div class="a" style="left:791px;top:358px;width:129px;height:16px;background:#d4edbc;border-radius:6px"></div>
<div class="a t" style="left:791.5px;top:360.6px;width:116px;text-align:center;font-size:11px;letter-spacing:0.2px;color:#276b43;-webkit-text-stroke:0.05px #276b43">Easy</div>
<svg class="a" style="left:907px;top:363.5px;" width="9" height="5" viewBox="0 0 9 5"><path d="M0 0 L9 0 L4.5 5 Z" fill="#276b43"/></svg>
<div class="a t d" style="left:250.5px;top:378.39px;font-size:13.3px;color:#000">car ac repair near me</div>
<div class="a t d" style="left:455px;top:378.39px;width:92px;text-align:center;font-size:13.3px;color:#000">USA</div>
<div class="a t d" style="left:548px;top:378.39px;width:90px;text-align:center;font-size:13.3px;color:#000;transform:scaleX(0.9)">4</div>
<div class="a t d" style="left:640px;top:378.39px;width:142px;text-align:right;font-size:13.3px;color:#000;transform:scaleX(0.9);transform-origin:100% 50%">50000</div>
<div class="a" style="left:791px;top:377px;width:129px;height:16px;background:#d4edbc;border-radius:6px"></div>
<div class="a t" style="left:791.5px;top:379.6px;width:116px;text-align:center;font-size:11px;letter-spacing:0.2px;color:#276b43;-webkit-text-stroke:0.05px #276b43">Easy</div>
<svg class="a" style="left:907px;top:382.5px;" width="9" height="5" viewBox="0 0 9 5"><path d="M0 0 L9 0 L4.5 5 Z" fill="#276b43"/></svg>
<div class="a t d" style="left:250.5px;top:397.39px;font-size:13.3px;color:#000">auto repair shops near me</div>
<div class="a t d" style="left:455px;top:397.39px;width:92px;text-align:center;font-size:13.3px;color:#000">USA</div>
<div class="a t d" style="left:548px;top:397.39px;width:90px;text-align:center;font-size:13.3px;color:#000;transform:scaleX(0.9)">14</div>
<div class="a t d" style="left:640px;top:397.39px;width:142px;text-align:right;font-size:13.3px;color:#000;transform:scaleX(0.9);transform-origin:100% 50%">500000</div>
<div class="a" style="left:791px;top:396px;width:129px;height:16px;background:#ffe5a0;border-radius:6px"></div>
<div class="a t" style="left:791.5px;top:398.6px;width:116px;text-align:center;font-size:11px;letter-spacing:0.85px;color:#3f3014;-webkit-text-stroke:0.05px #3f3014">Medium</div>
<svg class="a" style="left:907px;top:401.5px;" width="9" height="5" viewBox="0 0 9 5"><path d="M0 0 L9 0 L4.5 5 Z" fill="#3f3014"/></svg>
<div class="a t d" style="left:250.5px;top:416.39px;font-size:13.3px;color:#000">car alignment near me</div>
<div class="a t d" style="left:455px;top:416.39px;width:92px;text-align:center;font-size:13.3px;color:#000">USA</div>
<div class="a t d" style="left:548px;top:416.39px;width:90px;text-align:center;font-size:13.3px;color:#000;transform:scaleX(0.9)">13</div>
<div class="a t d" style="left:640px;top:416.39px;width:142px;text-align:right;font-size:13.3px;color:#000;transform:scaleX(0.9);transform-origin:100% 50%">50000</div>
<div class="a" style="left:791px;top:415px;width:129px;height:16px;background:#ffe5a0;border-radius:6px"></div>
<div class="a t" style="left:791.5px;top:417.6px;width:116px;text-align:center;font-size:11px;letter-spacing:0.85px;color:#3f3014;-webkit-text-stroke:0.05px #3f3014">Medium</div>
<svg class="a" style="left:907px;top:420.5px;" width="9" height="5" viewBox="0 0 9 5"><path d="M0 0 L9 0 L4.5 5 Z" fill="#3f3014"/></svg>
<div class="a t d" style="left:250.5px;top:435.39px;font-size:13.3px;color:#000">dent repair near me</div>
<div class="a t d" style="left:455px;top:435.39px;width:92px;text-align:center;font-size:13.3px;color:#000">USA</div>
<div class="a t d" style="left:548px;top:435.39px;width:90px;text-align:center;font-size:13.3px;color:#000;transform:scaleX(0.9)">28</div>
<div class="a t d" style="left:640px;top:435.39px;width:142px;text-align:right;font-size:13.3px;color:#000;transform:scaleX(0.9);transform-origin:100% 50%">50000</div>
<div class="a" style="left:791px;top:434px;width:129px;height:16px;background:#ffe5a0;border-radius:6px"></div>
<div class="a t" style="left:791.5px;top:436.6px;width:116px;text-align:center;font-size:11px;letter-spacing:0.85px;color:#3f3014;-webkit-text-stroke:0.05px #3f3014">Medium</div>
<svg class="a" style="left:907px;top:439.5px;" width="9" height="5" viewBox="0 0 9 5"><path d="M0 0 L9 0 L4.5 5 Z" fill="#3f3014"/></svg>
<div class="a t d" style="left:250.5px;top:454.39px;font-size:13.3px;color:#000">car battery replacement near me</div>
<div class="a t d" style="left:455px;top:454.39px;width:92px;text-align:center;font-size:13.3px;color:#000">USA</div>
<div class="a t d" style="left:548px;top:454.39px;width:90px;text-align:center;font-size:13.3px;color:#000;transform:scaleX(0.9)">0</div>
<div class="a t d" style="left:640px;top:454.39px;width:142px;text-align:right;font-size:13.3px;color:#000;transform:scaleX(0.9);transform-origin:100% 50%">50000</div>
<div class="a" style="left:791px;top:453px;width:129px;height:16px;background:#d4edbc;border-radius:6px"></div>
<div class="a t" style="left:791.5px;top:455.6px;width:116px;text-align:center;font-size:11px;letter-spacing:0.2px;color:#276b43;-webkit-text-stroke:0.05px #276b43">Easy</div>
<svg class="a" style="left:907px;top:458.5px;" width="9" height="5" viewBox="0 0 9 5"><path d="M0 0 L9 0 L4.5 5 Z" fill="#276b43"/></svg>
<div class="a t d" style="left:250.5px;top:473.39px;font-size:13.3px;color:#000">battery replacement near me</div>
<div class="a t d" style="left:455px;top:473.39px;width:92px;text-align:center;font-size:13.3px;color:#000">USA</div>
<div class="a t d" style="left:548px;top:473.39px;width:90px;text-align:center;font-size:13.3px;color:#000;transform:scaleX(0.9)">0</div>
<div class="a t d" style="left:640px;top:473.39px;width:142px;text-align:right;font-size:13.3px;color:#000;transform:scaleX(0.9);transform-origin:100% 50%">50000</div>
<div class="a" style="left:791px;top:472px;width:129px;height:16px;background:#d4edbc;border-radius:6px"></div>
<div class="a t" style="left:791.5px;top:474.6px;width:116px;text-align:center;font-size:11px;letter-spacing:0.2px;color:#276b43;-webkit-text-stroke:0.05px #276b43">Easy</div>
<svg class="a" style="left:907px;top:477.5px;" width="9" height="5" viewBox="0 0 9 5"><path d="M0 0 L9 0 L4.5 5 Z" fill="#276b43"/></svg>
<div class="a t d" style="left:250.5px;top:492.39px;font-size:13.3px;color:#000">car body shop near me</div>
<div class="a t d" style="left:455px;top:492.39px;width:92px;text-align:center;font-size:13.3px;color:#000">USA</div>
<div class="a t d" style="left:548px;top:492.39px;width:90px;text-align:center;font-size:13.3px;color:#000;transform:scaleX(0.9)">27</div>
<div class="a t d" style="left:640px;top:492.39px;width:142px;text-align:right;font-size:13.3px;color:#000;transform:scaleX(0.9);transform-origin:100% 50%">500000</div>
<div class="a" style="left:791px;top:491px;width:129px;height:16px;background:#ffe5a0;border-radius:6px"></div>
<div class="a t" style="left:791.5px;top:493.6px;width:116px;text-align:center;font-size:11px;letter-spacing:0.85px;color:#3f3014;-webkit-text-stroke:0.05px #3f3014">Medium</div>
<svg class="a" style="left:907px;top:496.5px;" width="9" height="5" viewBox="0 0 9 5"><path d="M0 0 L9 0 L4.5 5 Z" fill="#3f3014"/></svg>
<div class="a t d" style="left:250.5px;top:511.39px;font-size:13.3px;color:#000">car garage near me</div>
<div class="a t d" style="left:455px;top:511.39px;width:92px;text-align:center;font-size:13.3px;color:#000">USA</div>
<div class="a t d" style="left:548px;top:511.39px;width:90px;text-align:center;font-size:13.3px;color:#000;transform:scaleX(0.9)">0</div>
<div class="a t d" style="left:640px;top:511.39px;width:142px;text-align:right;font-size:13.3px;color:#000;transform:scaleX(0.9);transform-origin:100% 50%">50000</div>
<div class="a" style="left:791px;top:510px;width:129px;height:16px;background:#d4edbc;border-radius:6px"></div>
<div class="a t" style="left:791.5px;top:512.6px;width:116px;text-align:center;font-size:11px;letter-spacing:0.2px;color:#276b43;-webkit-text-stroke:0.05px #276b43">Easy</div>
<svg class="a" style="left:907px;top:515.5px;" width="9" height="5" viewBox="0 0 9 5"><path d="M0 0 L9 0 L4.5 5 Z" fill="#276b43"/></svg>
<div class="a t d" style="left:250.5px;top:530.39px;font-size:13.3px;color:#000">car air conditioner repair</div>
<div class="a t d" style="left:455px;top:530.39px;width:92px;text-align:center;font-size:13.3px;color:#000">USA</div>
<div class="a t d" style="left:548px;top:530.39px;width:90px;text-align:center;font-size:13.3px;color:#000;transform:scaleX(0.9)">5</div>
<div class="a t d" style="left:640px;top:530.39px;width:142px;text-align:right;font-size:13.3px;color:#000;transform:scaleX(0.9);transform-origin:100% 50%">500000</div>
<div class="a" style="left:791px;top:529px;width:129px;height:16px;background:#d4edbc;border-radius:6px"></div>
<div class="a t" style="left:791.5px;top:531.6px;width:116px;text-align:center;font-size:11px;letter-spacing:0.2px;color:#276b43;-webkit-text-stroke:0.05px #276b43">Easy</div>
<svg class="a" style="left:907px;top:534.5px;" width="9" height="5" viewBox="0 0 9 5"><path d="M0 0 L9 0 L4.5 5 Z" fill="#276b43"/></svg>
<div class="a t d" style="left:250.5px;top:549.39px;font-size:13.3px;color:#000">vehicle ac repair</div>
<div class="a t d" style="left:455px;top:549.39px;width:92px;text-align:center;font-size:13.3px;color:#000">USA</div>
<div class="a t d" style="left:548px;top:549.39px;width:90px;text-align:center;font-size:13.3px;color:#000;transform:scaleX(0.9)">6</div>
<div class="a t d" style="left:640px;top:549.39px;width:142px;text-align:right;font-size:13.3px;color:#000;transform:scaleX(0.9);transform-origin:100% 50%">500000</div>
<div class="a" style="left:791px;top:548px;width:129px;height:16px;background:#d4edbc;border-radius:6px"></div>
<div class="a t" style="left:791.5px;top:550.6px;width:116px;text-align:center;font-size:11px;letter-spacing:0.2px;color:#276b43;-webkit-text-stroke:0.05px #276b43">Easy</div>
<svg class="a" style="left:907px;top:553.5px;" width="9" height="5" viewBox="0 0 9 5"><path d="M0 0 L9 0 L4.5 5 Z" fill="#276b43"/></svg>
<div class="a t d" style="left:250.5px;top:568.39px;font-size:13.3px;color:#000">car aircon repair</div>
<div class="a t d" style="left:455px;top:568.39px;width:92px;text-align:center;font-size:13.3px;color:#000">USA</div>
<div class="a t d" style="left:548px;top:568.39px;width:90px;text-align:center;font-size:13.3px;color:#000;transform:scaleX(0.9)">9</div>
<div class="a t d" style="left:640px;top:568.39px;width:142px;text-align:right;font-size:13.3px;color:#000;transform:scaleX(0.9);transform-origin:100% 50%">500000</div>
<div class="a" style="left:791px;top:567px;width:129px;height:16px;background:#d4edbc;border-radius:6px"></div>
<div class="a t" style="left:791.5px;top:569.6px;width:116px;text-align:center;font-size:11px;letter-spacing:0.2px;color:#276b43;-webkit-text-stroke:0.05px #276b43">Easy</div>
<svg class="a" style="left:907px;top:572.5px;" width="9" height="5" viewBox="0 0 9 5"><path d="M0 0 L9 0 L4.5 5 Z" fill="#276b43"/></svg>
<div class="a t d" style="left:250.5px;top:587.39px;font-size:13.3px;color:#000">vehicle air conditioner repair</div>
<div class="a t d" style="left:455px;top:587.39px;width:92px;text-align:center;font-size:13.3px;color:#000">USA</div>
<div class="a t d" style="left:548px;top:587.39px;width:90px;text-align:center;font-size:13.3px;color:#000;transform:scaleX(0.9)">9</div>
<div class="a t d" style="left:640px;top:587.39px;width:142px;text-align:right;font-size:13.3px;color:#000;transform:scaleX(0.9);transform-origin:100% 50%">500000</div>
<div class="a" style="left:791px;top:586px;width:129px;height:16px;background:#d4edbc;border-radius:6px"></div>
<div class="a t" style="left:791.5px;top:588.6px;width:116px;text-align:center;font-size:11px;letter-spacing:0.2px;color:#276b43;-webkit-text-stroke:0.05px #276b43">Easy</div>
<svg class="a" style="left:907px;top:591.5px;" width="9" height="5" viewBox="0 0 9 5"><path d="M0 0 L9 0 L4.5 5 Z" fill="#276b43"/></svg>
<div class="a t d" style="left:250.5px;top:606.39px;font-size:13.3px;color:#000">cars automotive repair</div>
<div class="a t d" style="left:455px;top:606.39px;width:92px;text-align:center;font-size:13.3px;color:#000">USA</div>
<div class="a t d" style="left:548px;top:606.39px;width:90px;text-align:center;font-size:13.3px;color:#000;transform:scaleX(0.9)">1</div>
<div class="a t d" style="left:640px;top:606.39px;width:142px;text-align:right;font-size:13.3px;color:#000;transform:scaleX(0.9);transform-origin:100% 50%">500000</div>
<div class="a" style="left:791px;top:605px;width:129px;height:16px;background:#d4edbc;border-radius:6px"></div>
<div class="a t" style="left:791.5px;top:607.6px;width:116px;text-align:center;font-size:11px;letter-spacing:0.2px;color:#276b43;-webkit-text-stroke:0.05px #276b43">Easy</div>
<svg class="a" style="left:907px;top:610.5px;" width="9" height="5" viewBox="0 0 9 5"><path d="M0 0 L9 0 L4.5 5 Z" fill="#276b43"/></svg>
<div class="a t d" style="left:250.5px;top:625.39px;font-size:13.3px;color:#000">car ac service</div>
<div class="a t d" style="left:455px;top:625.39px;width:92px;text-align:center;font-size:13.3px;color:#000">USA</div>
<div class="a t d" style="left:548px;top:625.39px;width:90px;text-align:center;font-size:13.3px;color:#000;transform:scaleX(0.9)">11</div>
<div class="a t d" style="left:640px;top:625.39px;width:142px;text-align:right;font-size:13.3px;color:#000;transform:scaleX(0.9);transform-origin:100% 50%">50000</div>
<div class="a" style="left:791px;top:624px;width:129px;height:16px;background:#ffe5a0;border-radius:6px"></div>
<div class="a t" style="left:791.5px;top:626.6px;width:116px;text-align:center;font-size:11px;letter-spacing:0.85px;color:#3f3014;-webkit-text-stroke:0.05px #3f3014">Medium</div>
<svg class="a" style="left:907px;top:629.5px;" width="9" height="5" viewBox="0 0 9 5"><path d="M0 0 L9 0 L4.5 5 Z" fill="#3f3014"/></svg>
<div class="a t d" style="left:250.5px;top:644.39px;font-size:13.3px;color:#000">car air conditioning service</div>
<div class="a t d" style="left:455px;top:644.39px;width:92px;text-align:center;font-size:13.3px;color:#000">USA</div>
<div class="a t d" style="left:548px;top:644.39px;width:90px;text-align:center;font-size:13.3px;color:#000;transform:scaleX(0.9)">10</div>
<div class="a t d" style="left:640px;top:644.39px;width:142px;text-align:right;font-size:13.3px;color:#000;transform:scaleX(0.9);transform-origin:100% 50%">50000</div>
<div class="a" style="left:791px;top:643px;width:129px;height:16px;background:#d4edbc;border-radius:6px"></div>
<div class="a t" style="left:791.5px;top:645.6px;width:116px;text-align:center;font-size:11px;letter-spacing:0.2px;color:#276b43;-webkit-text-stroke:0.05px #276b43">Easy</div>
<svg class="a" style="left:907px;top:648.5px;" width="9" height="5" viewBox="0 0 9 5"><path d="M0 0 L9 0 L4.5 5 Z" fill="#276b43"/></svg>
<div class="a t d" style="left:250.5px;top:663.39px;font-size:13.3px;color:#000">car aircon servicing</div>
<div class="a t d" style="left:455px;top:663.39px;width:92px;text-align:center;font-size:13.3px;color:#000">USA</div>
<div class="a t d" style="left:548px;top:663.39px;width:90px;text-align:center;font-size:13.3px;color:#000;transform:scaleX(0.9)">0</div>
<div class="a t d" style="left:640px;top:663.39px;width:142px;text-align:right;font-size:13.3px;color:#000;transform:scaleX(0.9);transform-origin:100% 50%">50000</div>
<div class="a" style="left:791px;top:662px;width:129px;height:16px;background:#d4edbc;border-radius:6px"></div>
<div class="a t" style="left:791.5px;top:664.6px;width:116px;text-align:center;font-size:11px;letter-spacing:0.2px;color:#276b43;-webkit-text-stroke:0.05px #276b43">Easy</div>
<svg class="a" style="left:907px;top:667.5px;" width="9" height="5" viewBox="0 0 9 5"><path d="M0 0 L9 0 L4.5 5 Z" fill="#276b43"/></svg>
<div class="a t d" style="left:250.5px;top:682.39px;font-size:13.3px;color:#000">car maintenance service</div>
<div class="a t d" style="left:455px;top:682.39px;width:92px;text-align:center;font-size:13.3px;color:#000">USA</div>
<div class="a t d" style="left:548px;top:682.39px;width:90px;text-align:center;font-size:13.3px;color:#000;transform:scaleX(0.9)">24</div>
<div class="a t d" style="left:640px;top:682.39px;width:142px;text-align:right;font-size:13.3px;color:#000;transform:scaleX(0.9);transform-origin:100% 50%">50000</div>
<div class="a" style="left:791px;top:681px;width:129px;height:16px;background:#ffe5a0;border-radius:6px"></div>
<div class="a t" style="left:791.5px;top:683.6px;width:116px;text-align:center;font-size:11px;letter-spacing:0.85px;color:#3f3014;-webkit-text-stroke:0.05px #3f3014">Medium</div>
<svg class="a" style="left:907px;top:686.5px;" width="9" height="5" viewBox="0 0 9 5"><path d="M0 0 L9 0 L4.5 5 Z" fill="#3f3014"/></svg>
<div class="a" style="left:247px;top:199px;width:1px;height:495px;background:#000;"></div>
<div class="a" style="left:454px;top:199px;width:1px;height:495px;background:#000;"></div>
<div class="a" style="left:547px;top:199px;width:1px;height:495px;background:#000;"></div>
<div class="a" style="left:638px;top:199px;width:1px;height:495px;background:#000;"></div>
<div class="a" style="left:784px;top:199px;width:1px;height:495px;background:#000;"></div>
<div class="a" style="left:247px;top:223px;width:679px;height:1px;background:#000;"></div>
<div class="a" style="left:247px;top:242px;width:679px;height:1px;background:#000;"></div>
<div class="a" style="left:247px;top:261px;width:679px;height:1px;background:#000;"></div>
<div class="a" style="left:247px;top:280px;width:679px;height:1px;background:#000;"></div>
<div class="a" style="left:247px;top:299px;width:679px;height:1px;background:#000;"></div>
<div class="a" style="left:247px;top:318px;width:679px;height:1px;background:#000;"></div>
<div class="a" style="left:247px;top:337px;width:679px;height:1px;background:#000;"></div>
<div class="a" style="left:247px;top:356px;width:679px;height:1px;background:#000;"></div>
<div class="a" style="left:247px;top:375px;width:679px;height:1px;background:#000;"></div>
<div class="a" style="left:247px;top:394px;width:679px;height:1px;background:#000;"></div>
<div class="a" style="left:247px;top:413px;width:679px;height:1px;background:#000;"></div>
<div class="a" style="left:247px;top:432px;width:679px;height:1px;background:#000;"></div>
<div class="a" style="left:247px;top:451px;width:679px;height:1px;background:#000;"></div>
<div class="a" style="left:247px;top:470px;width:679px;height:1px;background:#000;"></div>
<div class="a" style="left:247px;top:489px;width:679px;height:1px;background:#000;"></div>
<div class="a" style="left:247px;top:508px;width:679px;height:1px;background:#000;"></div>
<div class="a" style="left:247px;top:527px;width:679px;height:1px;background:#000;"></div>
<div class="a" style="left:247px;top:546px;width:679px;height:1px;background:#000;"></div>
<div class="a" style="left:247px;top:565px;width:679px;height:1px;background:#000;"></div>
<div class="a" style="left:247px;top:584px;width:679px;height:1px;background:#000;"></div>
<div class="a" style="left:247px;top:603px;width:679px;height:1px;background:#000;"></div>
<div class="a" style="left:247px;top:622px;width:679px;height:1px;background:#000;"></div>
<div class="a" style="left:247px;top:641px;width:679px;height:1px;background:#000;"></div>
<div class="a" style="left:247px;top:660px;width:679px;height:1px;background:#000;"></div>
<div class="a" style="left:247px;top:679px;width:679px;height:1px;background:#000;"></div>
<div class="a" style="left:926px;top:199px;width:1px;height:495px;background:#3f5f4c;"></div>
<div class="a" style="left:31px;top:223px;width:216px;height:1px;background:#3f5168;"></div>
<div class="a" style="left:246px;top:198px;width:2px;height:26px;background:#2b5fb4;"></div>
<div class="a" style="left:0px;top:694px;width:1365px;height:10px;background:#ffffff;"></div>
<div class="a" style="left:32px;top:694px;width:823px;height:7px;background:#dadce0;border-radius:4px"></div>
<div class="a" style="left:0px;top:703px;width:1365px;height:1px;background:#e8eaed;"></div>
<div class="a" style="left:1357px;top:182px;width:8px;height:512px;background:#ffffff;"></div>
<div class="a" style="left:1358px;top:200px;width:7px;height:23px;background:#dadce0;border-radius:4px"></div>
<div class="a" style="left:1357px;top:199px;width:1px;height:495px;background:#d5d5d5;"></div>
<div class="a" style="left:1358px;top:673px;width:7px;height:1px;background:#e4e4e4;"></div>
<div class="a" style="left:1358px;top:684px;width:7px;height:1px;background:#e4e4e4;"></div>
<svg class="a" style="left:1360px;top:677px;" width="5" height="3" viewBox="0 0 5 3"><path d="M0 3 L5 3 L2.5 0 Z" fill="#9aa0a6"/></svg>
<svg class="a" style="left:1360px;top:688px;" width="5" height="3" viewBox="0 0 5 3"><path d="M0 0 L5 0 L2.5 3 Z" fill="#9aa0a6"/></svg>
<div class="a" style="left:1338px;top:694px;width:1px;height:9px;background:#e4e4e4;"></div>
<div class="a" style="left:1348px;top:694px;width:1px;height:9px;background:#e4e4e4;"></div>
<div class="a" style="left:1358px;top:694px;width:1px;height:9px;background:#e4e4e4;"></div>
<svg class="a" style="left:1342px;top:697px;" width="3" height="4" viewBox="0 0 3 4"><path d="M3 0 L3 4 L0 2 Z" fill="#9aa0a6"/></svg>
<svg class="a" style="left:1353px;top:697px;" width="3" height="4" viewBox="0 0 3 4"><path d="M0 0 L0 4 L3 2 Z" fill="#9aa0a6"/></svg>
<div class="a" style="left:0px;top:704px;width:1365px;height:24px;background:#f9fbfd;"></div>
<svg class="a" style="left:37.5px;top:712.5px;" width="8" height="8" viewBox="0 0 8 8"><path d="M4 0 L4 8 M0 4 L8 4" stroke="#444746" stroke-width="1.2"/></svg>
<svg class="a" style="left:63.5px;top:713px;" width="10" height="8" viewBox="0 0 10 8"><path d="M0 1 L10 1 M0 4 L10 4 M0 7 L10 7" stroke="#444746" stroke-width="1.2"/></svg>
<div class="a t" style="left:99.5px;top:711.9px;font-size:9.5px;color:#444746;letter-spacing:0.5px">Info</div>
<svg class="a" style="left:124px;top:716px;" width="6" height="3" viewBox="0 0 6 3"><path d="M0 0 L6 0 L3 3 Z" fill="#444746"/></svg>
<div class="a" style="left:139px;top:704px;width:98px;height:24px;background:#e1e9f7;"></div>
<div class="a t" style="left:147.5px;top:711.8px;font-size:9.6px;color:#0b57d0;font-weight:bold;letter-spacing:0.2px">Main Keyword</div>
<svg class="a" style="left:222px;top:716px;" width="6" height="3" viewBox="0 0 6 3"><path d="M0 0 L6 0 L3 3 Z" fill="#0b57d0"/></svg>
<div class="a t" style="left:245px;top:711.9px;font-size:9.5px;color:#444746;letter-spacing:0.25px">Sheet3</div>
<svg class="a" style="left:284px;top:716px;" width="6" height="3" viewBox="0 0 6 3"><path d="M0 0 L6 0 L3 3 Z" fill="#444746"/></svg>
<svg class="a" style="left:1208px;top:713px;" width="8" height="9" viewBox="0 0 8 9"><path d="M0 0.5 L8 0.5 L5 4.5 L5 8.5 L3 8.5 L3 4.5 Z" fill="#444746"/></svg>
<div class="a t" style="left:1219px;top:713px;font-size:9.4px;color:#5f6368;">66 of 104 rows displayed</div>
<svg class="a" style="left:1344px;top:713px;" width="6" height="10" viewBox="0 0 6 10"><path d="M5 1 L1 5 L5 9" fill="none" stroke="#444746" stroke-width="1.4"/></svg>
<div class="a" style="left:0px;top:728px;width:1365px;height:39px;background:#1c1c1c;"></div>
<svg class="a" style="left:16px;top:740px;" width="17" height="17" viewBox="0 0 17 17"><path d="M0 2.3 L6.8 1.4 L6.8 7.8 L0 7.8 Z M7.8 1.25 L17 0 L17 7.8 L7.8 7.8 Z M0 8.8 L6.8 8.8 L6.8 15.4 L0 14.5 Z M7.8 8.8 L17 8.8 L17 17 L7.8 15.6 Z" fill="#ffffff"/></svg>
<svg class="a" style="left:60px;top:736px;" width="24" height="24" viewBox="0 0 24 24"><circle cx="14" cy="9.6" r="7.6" fill="none" stroke="#fff" stroke-width="2"/><path d="M8.6 15 L2 21.8" stroke="#fff" stroke-width="2.2" stroke-linecap="round"/></svg>
<svg class="a" style="left:109.7px;top:735.7px" width="24.6" height="24.6" viewBox="-12 -12 24 24"><path d="M0 -12 A12 12 0 0 1 10.39 6 L5.2 3 A6 6 0 0 0 0 -6 Z" fill="#fbc02d"/><path d="M0 -12 A12 12 0 0 0 -10.39 6 L-5.2 3 A6 6 0 0 1 0 -6 Z" fill="#e53935"/><path d="M-10.39 -6 A12 12 0 0 0 0 12 L5.2 3 A6 6 0 0 1 -5.2 -3 Z" fill="#43a047"/><path d="M0 -12 A12 12 0 0 1 10.39 -6 L0 -6 Z" fill="#e53935"/><path d="M-10.39 -6 L-5.2 3 A6 6 0 0 1 0 -6 L0 -12 A12 12 0 0 0 -10.39 -6 Z" fill="#e53935"/><path d="M10.39 -6 A12 12 0 0 1 0 12 L5.2 3 A6 6 0 0 0 0 -6 Z" fill="#fbc02d"/><circle r="5.4" fill="#fff"/><circle r="4.3" fill="#1a73e8"/></svg>
<svg class="a" style="left:158px;top:736px;" width="25" height="24" viewBox="0 0 25 24"><defs><radialGradient id="gl" cx="0.35" cy="0.35" r="0.7"><stop offset="0" stop-color="#e8f0d0"/><stop offset="0.5" stop-color="#7cb342"/><stop offset="1" stop-color="#1e5aa8"/></radialGradient></defs><circle cx="15.5" cy="9" r="8" fill="url(#gl)"/><path d="M2 16 Q1 9 8 7.5 Q5 11 7 15 Q9 18 14 17 L13 14 L21 17 L13.5 22 L13.5 19.5 Q5 21 2 16 Z" fill="#4caf50"/><path d="M2 16 Q1 9 8 7.5 Q4.5 10.5 5.5 14 Q3.5 14.5 2 16 Z" fill="#e53935"/><path d="M5.5 14 Q4.5 10.5 8 7.5 L9 9 Q7 11.5 8 14 Z" fill="#fdd835"/></svg>
<div class="a" style="left:199px;top:765px;width:133px;height:2px;background:#9ccbf0;"></div>
<svg class="a" style="left:207px;top:738px;" width="15" height="21" viewBox="0 0 15 21"><path d="M1 0 L12 0 L12 18 L13.5 18 L13.5 2 L14 2 L14 19 L3 19 L3 21 L1 19 Z" fill="#e8c25a"/><path d="M1 0 L12 0 L12 18 L3 18 L1 19 Z" fill="#f6d77d"/><path d="M3 18 L14 18 L14 19 L3 19 L3 21 L1 19 Z" fill="#d9ae48"/></svg>
<div class="a t" style="left:232px;top:741.7px;font-size:12px;color:#ffffff;">3. My All Docu...</div>
<div class="a" style="left:337px;top:728px;width:141px;height:39px;background:#474747;"></div>
<div class="a" style="left:337px;top:765px;width:141px;height:2px;background:#9ccbf0;"></div>
<svg class="a" style="left:347px;top:736px" width="24" height="24" viewBox="-12 -12 24 24"><path d="M0 -12 A12 12 0 0 1 10.39 6 L5.2 3 A6 6 0 0 0 0 -6 Z" fill="#fbc02d"/><path d="M0 -12 A12 12 0 0 0 -10.39 6 L-5.2 3 A6 6 0 0 1 0 -6 Z" fill="#e53935"/><path d="M-10.39 -6 A12 12 0 0 0 0 12 L5.2 3 A6 6 0 0 1 -5.2 -3 Z" fill="#43a047"/><path d="M0 -12 A12 12 0 0 1 10.39 -6 L0 -6 Z" fill="#e53935"/><path d="M-10.39 -6 L-5.2 3 A6 6 0 0 1 0 -6 L0 -12 A12 12 0 0 0 -10.39 -6 Z" fill="#e53935"/><path d="M10.39 -6 A12 12 0 0 1 0 12 L5.2 3 A6 6 0 0 0 0 -6 Z" fill="#fbc02d"/><circle r="5.4" fill="#fff"/><circle r="4.3" fill="#1a73e8"/></svg>
<div class="a" style="left:361px;top:747px;width:14px;height:14px;border-radius:50%;background:#d8d8d8;overflow:hidden"><div class="a" style="left:4px;top:2px;width:6px;height:7px;border-radius:3px;background:#6b4c3b"></div><div class="a" style="left:1px;top:9px;width:12px;height:6px;border-radius:5px 5px 0 0;background:#222"></div></div>
<div class="a t" style="left:374px;top:741.7px;font-size:12px;color:#ffffff;letter-spacing:-0.2px">Keywoard: "Car ...</div>
<div class="a" style="left:481px;top:765px;width:133px;height:2px;background:#9ccbf0;"></div>
<svg class="a" style="left:488px;top:736px;" width="22" height="21" viewBox="0 0 22 21"><defs><linearGradient id="wg" x1="0" y1="0" x2="1" y2="1"><stop offset="0" stop-color="#ffffff"/><stop offset="0.6" stop-color="#cfe3fb"/><stop offset="1" stop-color="#ffffff"/></linearGradient></defs><path d="M2 0 L20 0 L20 21 L0 21 L0 2 Z" fill="url(#wg)"/><path d="M3 3 L6 14 L9 6 L12 14 L15 3" fill="none" stroke="#1d55b3" stroke-width="2.6" stroke-linejoin="bevel"/><path d="M16 12 L21 14 L19 18 Z" fill="#dde8f5"/></svg>
<div class="a t" style="left:516.5px;top:741.7px;font-size:12px;color:#ffffff;letter-spacing:-0.54px">SEO Clerks Gig 0...</div>
<div class="a" style="left:625px;top:765px;width:133px;height:2px;background:#9ccbf0;"></div>
<svg class="a" style="left:632px;top:737px;" width="21" height="21" viewBox="0 0 21 21"><rect x="0" y="0" width="21" height="21" rx="2" fill="#330000"/><text x="3" y="15.5" font-family="Liberation Sans" font-weight="bold" font-size="12" fill="#ff9a00">Ai</text></svg>
<div class="a t" style="left:658px;top:741.7px;font-size:12px;color:#ffffff;letter-spacing:-0.38px">SEO Clerk - Cop...</div>
<div class="a" style="left:768px;top:765px;width:133px;height:2px;background:#9ccbf0;"></div>
<svg class="a" style="left:773px;top:737px;" width="22" height="22" viewBox="0 0 22 22"><rect x="0.5" y="0.5" width="21" height="21" rx="2" fill="#001e36" stroke="#31a8ff" stroke-width="1"/><text x="3.5" y="15.5" font-family="Liberation Sans" font-weight="bold" font-size="11.5" fill="#31a8ff">Ps</text></svg>
<div class="a t" style="left:800px;top:741.7px;font-size:12px;color:#ffffff;">Adobe Photosh...</div>
<div class="a" style="left:909px;top:728px;width:133px;height:39px;background:#3c3c3c;"></div>
<div class="a" style="left:909px;top:728px;width:4px;height:39px;background:#7d7a2e;"></div>
<div class="a" style="left:909px;top:765px;width:132px;height:2px;background:#e7d13a;"></div>
<svg class="a" style="left:915px;top:739px;" width="22" height="18" viewBox="0 0 22 18"><path d="M0 0 L14.5 9 L0 18 Z" fill="#6b3ce8"/><path d="M21.5 0 L21.5 18 L10.5 9 Z" fill="#d9cbf7"/><path d="M10.5 9 L13 7.4 L14.5 9 L13 10.6 Z" fill="#3d3d3d"/></svg>
<div class="a t" style="left:942px;top:741.7px;font-size:12px;color:#ffffff;letter-spacing:-0.13px">08. How to creat...</div>
<svg class="a" style="left:1071px;top:736px;" width="25" height="24" viewBox="0 0 25 24"><defs><linearGradient id="mg" x1="0" y1="0" x2="0" y2="1"><stop offset="0" stop-color="#ffd24a"/><stop offset="1" stop-color="#f07a1a"/></linearGradient></defs><path d="M16 1 A11.5 11.5 0 1 1 1 16 A11 11 0 0 0 16 1 Z" fill="url(#mg)"/></svg>
<div class="a t" style="left:1104px;top:741.5px;font-size:13px;color:#ffffff;">18°C</div>
<svg class="a" style="left:1158px;top:744px;" width="14" height="8" viewBox="0 0 14 8"><path d="M0.8 7.2 L7 1 L13.2 7.2" fill="none" stroke="#fff" stroke-width="1.1"/></svg>
<svg class="a" style="left:1183px;top:740px;" width="13" height="17" viewBox="0 0 13 17"><path d="M3 1.5 Q5.5 0.3 8 1.5 M3 15.5 Q5.5 16.7 8 15.5" fill="none" stroke="#fff" stroke-width="1"/><rect x="1.5" y="5.5" width="7" height="6" rx="1.5" fill="none" stroke="#fff" stroke-width="1"/><path d="M8.5 7.5 L11.5 5.5 L11.5 11.5 L8.5 9.5" fill="none" stroke="#fff" stroke-width="1"/></svg>
<svg class="a" style="left:1205px;top:742px;" width="17" height="13" viewBox="0 0 17 13"><rect x="3.5" y="0.5" width="12" height="9" fill="none" stroke="#fff" stroke-width="1"/><rect x="0.5" y="0.5" width="3.5" height="5" fill="#1c1c1c" stroke="#fff" stroke-width="1"/><path d="M2.2 5.5 L2.2 12.5 M9.5 9.5 L9.5 12 M6 12.5 L13 12.5" stroke="#fff" stroke-width="1"/></svg>
<svg class="a" style="left:1229px;top:742px;" width="17" height="13" viewBox="0 0 17 13"><path d="M0.5 4 L3.5 4 L7.5 0.7 L7.5 12.3 L3.5 9 L0.5 9 Z" fill="none" stroke="#fff" stroke-width="1"/><path d="M9.5 4.2 Q10.8 6.5 9.5 8.8 M11.5 2.5 Q13.8 6.5 11.5 10.5" fill="none" stroke="#fff" stroke-width="1"/><path d="M13.8 0.8 Q16.8 6.5 13.8 12.2" fill="none" stroke="#888" stroke-width="1"/></svg>
<div class="a t" style="left:1258.5px;top:733.5px;font-size:12px;color:#ffffff;">9:32 AM</div>
<div class="a t" style="left:1252px;top:750.5px;font-size:12px;color:#ffffff;">11/21/2025</div>
<svg class="a" style="left:1325px;top:738px;" width="27" height="27" viewBox="0 0 27 27"><path d="M0.5 0.5 L16.5 0.5 L16.5 13 L9 13 L5 17 L5 13 L0.5 13 Z" fill="#fff"/><path d="M3.5 4 L13.5 4 M3.5 6.5 L13.5 6.5 M3.5 9 L11 9" stroke="#1c1c1c" stroke-width="1.1"/><circle cx="16.5" cy="17" r="7.2" fill="#2a2a2a" stroke="#8a8a8a" stroke-width="1.6"/><text x="13.6" y="21.5" font-family="Liberation Sans" font-weight="bold" font-size="11.5" fill="#fff">1</text></svg>
<div class="a" style="left:1361px;top:728px;width:1px;height:39px;background:#6a6a6a;"></div>
</div></body></html>
